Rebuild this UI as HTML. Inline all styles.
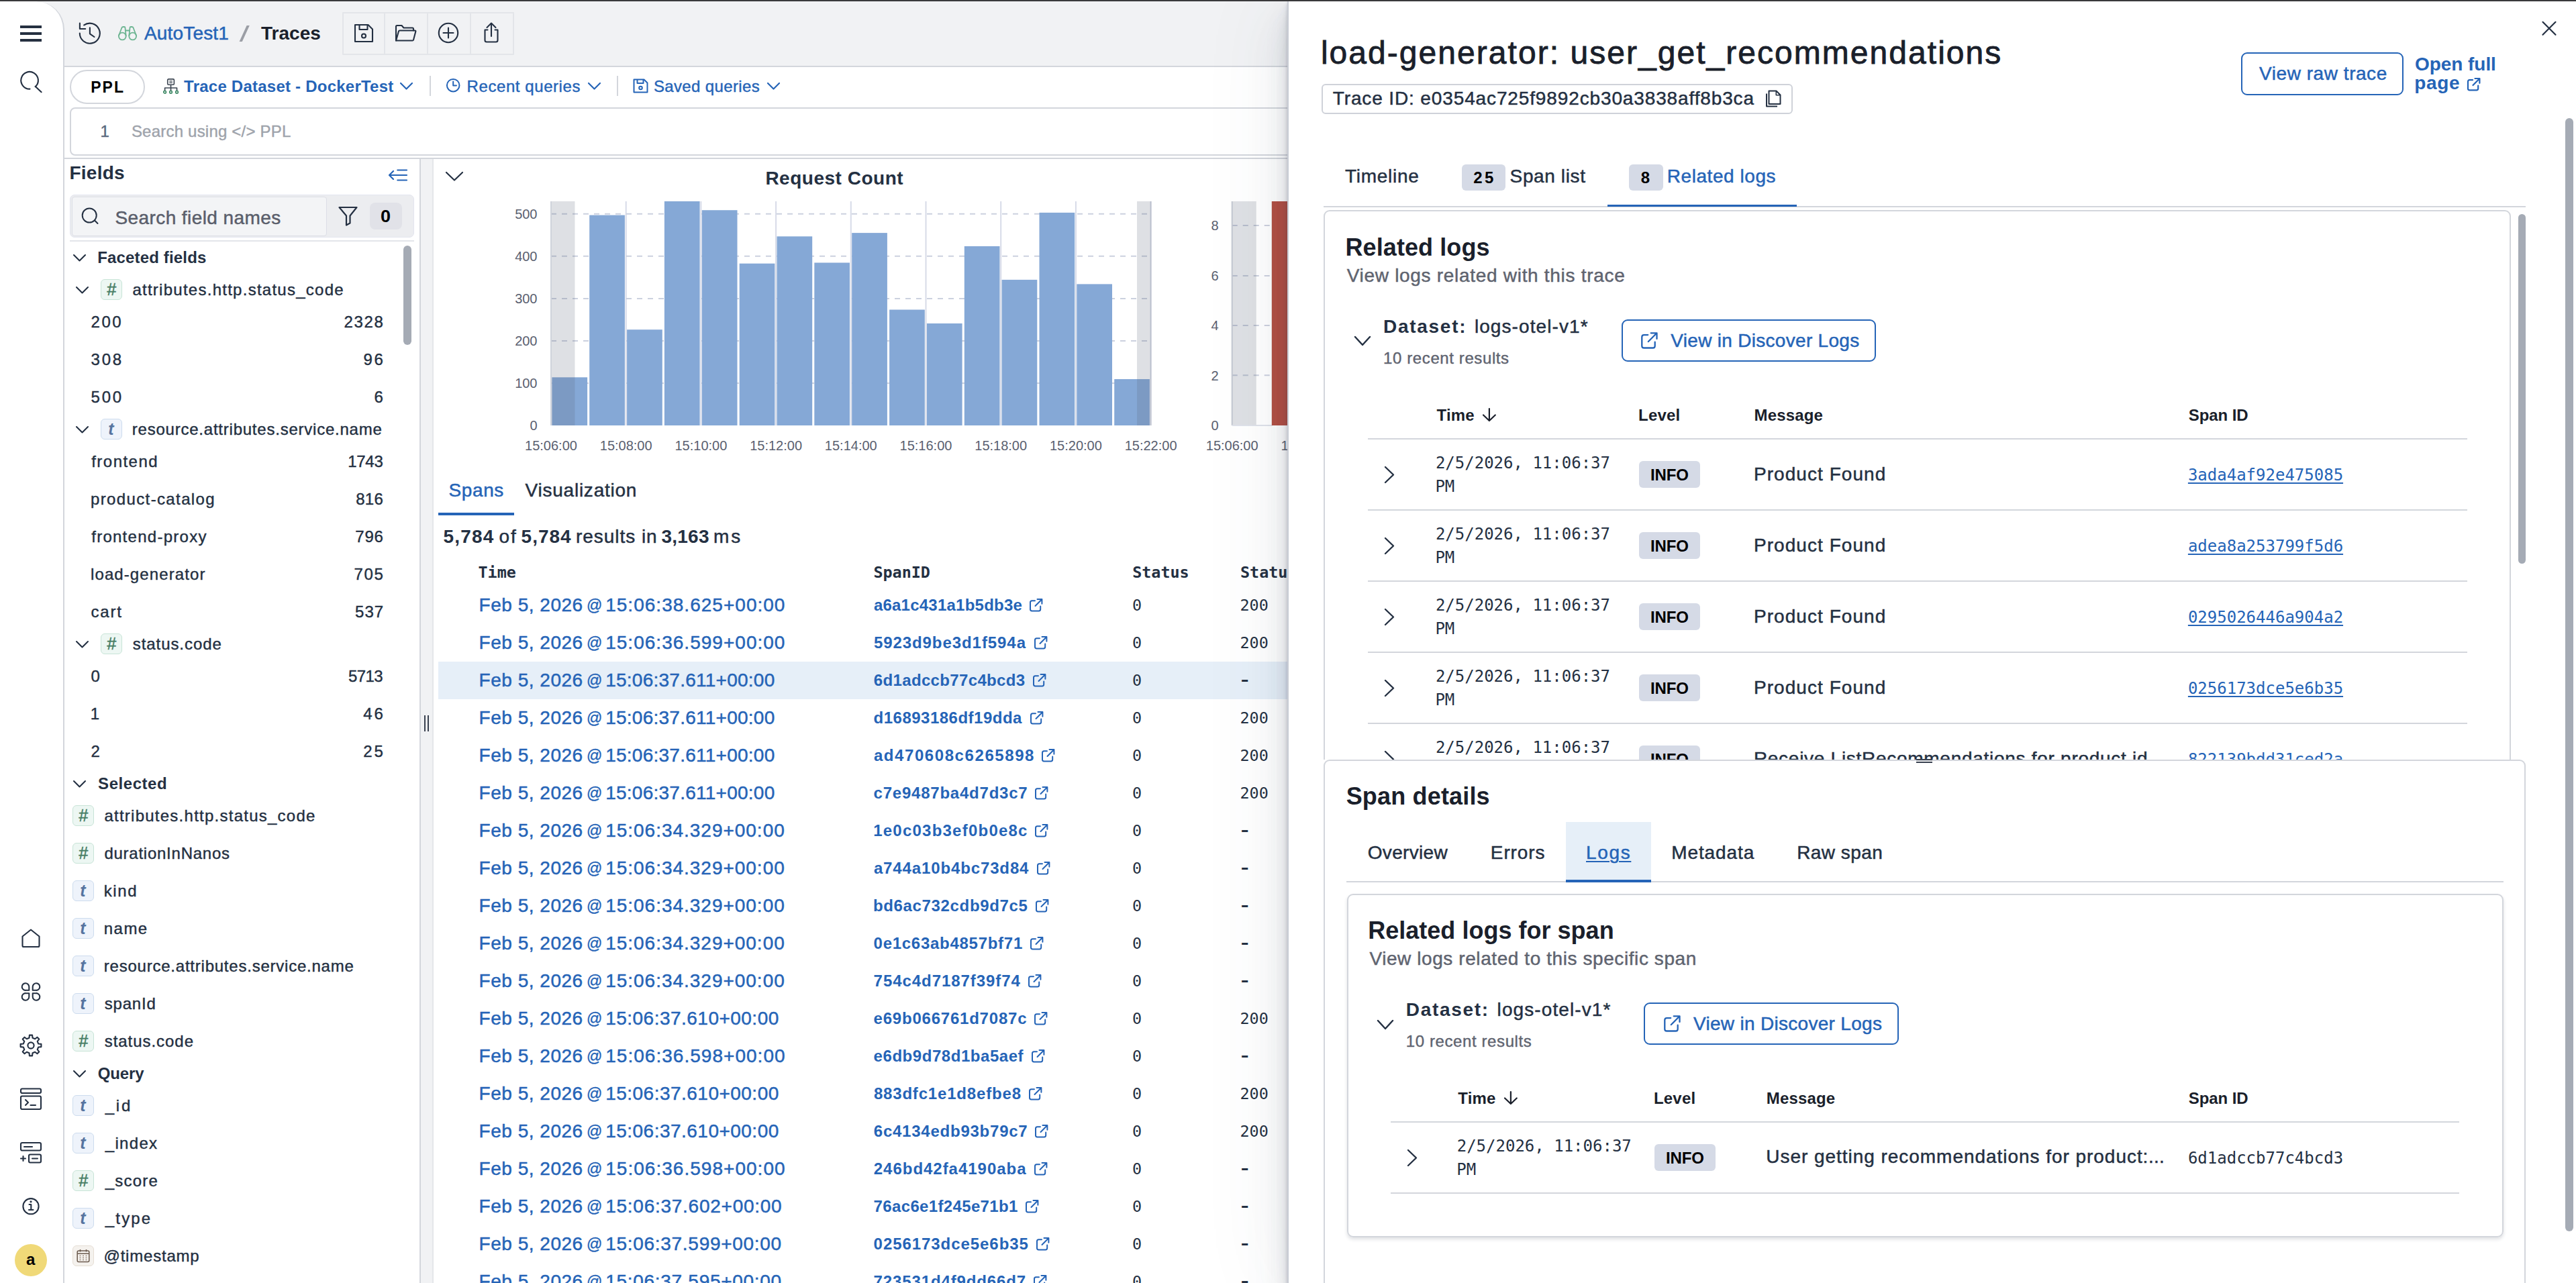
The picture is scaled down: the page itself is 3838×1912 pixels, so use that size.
<!DOCTYPE html>
<html lang="en"><head><meta charset="utf-8"><title>Traces - AutoTest1</title>
<style>
html,body{margin:0;padding:0;}
body{width:3838px;height:1912px;overflow:hidden;position:relative;background:#fff;font-family:"Liberation Sans",Arial,sans-serif;}
.t{position:absolute;white-space:pre;}
.m{font-family:"DejaVu Sans Mono","Liberation Mono",monospace;}
.b{position:absolute;box-sizing:border-box;}
svg{position:absolute;overflow:visible;}
.ic{fill:none;stroke:#243042;stroke-width:2.1;stroke-linecap:round;stroke-linejoin:round;}
.u{text-decoration:underline;text-decoration-thickness:2px;text-underline-offset:2.5px;}
</style></head><body>

<div class="b" style="left:0px;top:0px;width:3838px;height:100px;background:#f1f2f4;"></div>
<div class="b" style="left:0px;top:98px;width:3838px;height:2px;background:#d3d6dc;"></div>
<div class="b" style="left:0px;top:2px;width:96px;height:1910px;background:#fff;border-right:2px solid #d3d6dc;border-top-right-radius:42px;"></div>
<div class="b" style="left:0px;top:0px;width:3838px;height:2px;background:#3a3a3c;"></div>
<div class="b" style="left:30px;top:38.2px;width:32px;height:3.7px;background:#253040;"></div>
<div class="b" style="left:30px;top:48.2px;width:32px;height:3.7px;background:#253040;"></div>
<div class="b" style="left:30px;top:58.2px;width:32px;height:3.7px;background:#253040;"></div>
<svg style="left:26px;top:102px" width="40" height="40" viewBox="0 0 40 40"><path class="ic" d="M18.5 30.6 A12.8 12.8 0 1 1 26.8 27.2"/><path class="ic" d="M26.6 26.8 L35.6 35.2"/></svg>
<svg style="left:26px;top:1378px" width="40" height="40" viewBox="0 0 40 40"><path class="ic" d="M7.5 17.5 L20 7.5 L32.5 17.5 L32.5 31.2 Q32.5 33 30.7 33 L9.3 33 Q7.5 33 7.5 31.2 Z"/></svg>
<svg style="left:26px;top:1458px" width="40" height="40" viewBox="0 0 40 40"><path class="ic" d="M17.3 17.8 L12.5 17.8 A5.3 5.3 0 1 1 17.3 12.5 Z"/><path class="ic" d="M22.7 17.8 L27.5 17.8 A5.3 5.3 0 1 0 22.7 12.5 Z"/><path class="ic" d="M17.3 22.2 L12.5 22.2 A5.3 5.3 0 1 0 17.3 27.5 Z"/><path class="ic" d="M22.7 22.2 L27.5 22.2 A5.3 5.3 0 1 1 22.7 27.5 Z"/></svg>
<svg style="left:26px;top:1538px" width="40" height="40" viewBox="0 0 40 40"><path class="ic" d="M17.5 8.8 L17.9 4.6 L22.1 4.6 L22.5 8.8 L26.2 10.3 L29.4 7.7 L32.3 10.6 L29.7 13.8 L31.2 17.5 L35.4 17.9 L35.4 22.1 L31.2 22.5 L29.7 26.2 L32.3 29.4 L29.4 32.3 L26.2 29.7 L22.5 31.2 L22.1 35.4 L17.9 35.4 L17.5 31.2 L13.8 29.7 L10.6 32.3 L7.7 29.4 L10.3 26.2 L8.8 22.5 L4.6 22.1 L4.6 17.9 L8.8 17.5 L10.3 13.8 L7.7 10.6 L10.6 7.7 L13.8 10.3 Z"/><circle class="ic" cx="20" cy="20" r="4.6"/></svg>
<svg style="left:26px;top:1618px" width="40" height="40" viewBox="0 0 40 40"><rect class="ic" x="5" y="4.5" width="30" height="6.5" rx="2"/><rect class="ic" x="5" y="15.5" width="30" height="19.5" rx="2"/><path class="ic" d="M12 21 L16 25 L12 29 M19.5 29 L27 29"/></svg>
<svg style="left:26px;top:1698px" width="40" height="40" viewBox="0 0 40 40"><rect class="ic" x="5" y="5" width="30" height="11.5" rx="2"/><path class="ic" d="M10 11 L22 11"/><rect class="ic" x="17" y="22.5" width="18" height="12" rx="2"/><path class="ic" d="M22 28.5 L30 28.5 M5 28.5 L12 28.5 M8.5 25 L8.5 32"/></svg>
<svg style="left:26px;top:1778px" width="40" height="40" viewBox="0 0 40 40"><circle class="ic" cx="20" cy="19.7" r="11.6"/><path class="ic" d="M17.5 17 L20.3 17 L20.3 25 M17 25 L23.5 25"/><circle cx="20" cy="12.8" r="1.6" fill="#243042"/></svg>
<div class="b" style="left:21.7px;top:1854px;width:48.4px;height:48.4px;background:#f0d978;border-radius:50%;"></div>
<span class="t" style="top:1865.1px;font-size:24px;line-height:24px;left:38.9px;font-weight:700;color:#000;">a</span>
<svg style="left:114px;top:30px" width="40" height="40" viewBox="0 0 40 40"><path class="ic" d="M11.2 7.4 A15 15 0 1 1 4.8 19.6"/><path class="ic" d="M4.9 4.6 L4.9 13 L13.2 13"/><path class="ic" d="M19.9 11.3 L19.9 20.3 L26.5 25"/></svg>
<svg style="left:174px;top:36px" width="32" height="28" viewBox="0 0 32 28"><g fill="none" stroke="#6db592" stroke-width="1.8" stroke-linejoin="round" stroke-linecap="round"><circle cx="8.3" cy="18" r="5.4"/><circle cx="23.7" cy="18" r="5.4"/><path d="M3.2 16.5 L7.5 5.2 Q8 4 9.5 4 L11 4 Q12.5 4 12.5 5.5 L13.6 17"/><path d="M28.8 16.5 L24.5 5.2 Q24 4 22.5 4 L21 4 Q19.5 4 19.5 5.5 L18.4 17"/><path d="M12.8 9.5 L19.2 9.5"/></g></svg>
<span class="t" style="top:36.3px;font-size:28px;line-height:28px;left:215.0px;letter-spacing:0.16px;-webkit-text-stroke:0.49px;color:#2564b7;">AutoTest1</span>
<svg style="left:354px;top:36px" width="20" height="28" viewBox="0 0 20 28"><path d="M13.6 2 L17.8 2 L6.8 26 L2.6 26 Z" fill="#9b9ea5"/></svg>
<span class="t" style="top:36.3px;font-size:28px;line-height:28px;left:389.0px;letter-spacing:0.03px;font-weight:700;color:#1a1f2b;">Traces</span>
<div class="b" style="left:510px;top:17.6px;width:256px;height:64.2px;border:2px solid #e3e5e9;border-radius:1px;"></div>
<div class="b" style="left:571.6px;top:17.6px;width:2px;height:64.2px;background:#e3e5e9;"></div>
<div class="b" style="left:635.8px;top:17.6px;width:2px;height:64.2px;background:#e3e5e9;"></div>
<div class="b" style="left:700px;top:17.6px;width:2px;height:64.2px;background:#e3e5e9;"></div>
<svg style="left:522px;top:29px" width="40" height="40" viewBox="0 0 40 40"><path class="ic" d="M7 8 L26.5 8 L33 14.5 L33 33 L7 33 Z"/><path class="ic" d="M13.5 8.5 L13.5 15 L25.5 15 L25.5 8.5"/><circle class="ic" cx="20" cy="24.5" r="3"/></svg>
<svg style="left:584px;top:30px" width="40" height="40" viewBox="0 0 40 40"><path class="ic" d="M6 30.5 L6 9.5 Q6 8 7.5 8 L14.5 8 L17.5 11.5 L30.5 11.5 Q32 11.5 32 13 L32 15.5"/><path class="ic" d="M6 30.5 L10 16.5 Q10.3 15.5 11.5 15.5 L34 15.5 Q35.8 15.5 35.3 17 L32 29.5 Q31.7 30.5 30.5 30.5 Z"/></svg>
<svg style="left:648px;top:29px" width="40" height="40" viewBox="0 0 40 40"><circle class="ic" cx="20" cy="20" r="14.2"/><path class="ic" d="M20 12.5 L20 27.5 M12.5 20 L27.5 20"/></svg>
<svg style="left:712px;top:29px" width="40" height="40" viewBox="0 0 40 40"><path class="ic" d="M14.5 15.5 L10.5 15.5 L10.5 31 Q10.5 33.5 13 33.5 L27 33.5 Q29.5 33.5 29.5 31 L29.5 15.5 L25.5 15.5"/><path class="ic" d="M20 25 L20 6 M13.5 12 L20 5.5 L26.5 12"/></svg>
<div class="b" style="left:96px;top:100px;width:3742px;height:136px;background:#fff;"></div>
<div class="b" style="left:104.2px;top:104.4px;width:111.4px;height:51px;border:2px solid #d3d6dc;border-radius:26px;"></div>
<span class="t" style="top:118.5px;font-size:23px;line-height:23px;left:135.2px;letter-spacing:2.02px;font-weight:700;color:#000;">PPL</span>
<svg style="left:241.3px;top:113.8px" width="27.6" height="29.4" viewBox="0 0 30 32"><g fill="none" stroke="#3d4652" stroke-width="1.8" stroke-linejoin="round"><rect x="9.5" y="4.3" width="10.5" height="9" rx="1.5"/><path d="M12.3 7.5 L17.2 7.5 M12.3 10.2 L17.2 10.2" stroke-width="1.3"/><path d="M14.7 13.5 L14.7 23 M5 23 L5 18.5 L24.5 18.5 L24.5 23"/></g><g fill="none" stroke="#3f8a66" stroke-width="1.8"><circle cx="5" cy="25.3" r="2"/><circle cx="14.7" cy="25.3" r="2"/><circle cx="24.5" cy="25.3" r="2"/></g></svg>
<span class="t" style="top:116.5px;font-size:24px;line-height:24px;left:274.1px;letter-spacing:0.23px;font-weight:700;color:#2564b7;">Trace Dataset - DockerTest</span>
<svg style="left:594.3px;top:121.25px" width="23" height="14.5" viewBox="0 0 23 14.5"><path d="M3 3 L11.5 11.5 L20 3" fill="none" stroke="#2564b7" stroke-width="2.2" stroke-linecap="round" stroke-linejoin="round"/></svg>
<div class="b" style="left:640px;top:112.7px;width:2px;height:30.7px;background:#d3d6dc;"></div>
<svg style="left:663px;top:115px" width="24" height="24" viewBox="0 0 24 24"><g fill="none" stroke="#2564b7" stroke-width="2" stroke-linecap="round" stroke-linejoin="round"><circle cx="12.2" cy="12.2" r="9.3"/><path d="M12.2 6.5 L12.2 12.5 L17 12.5"/></g></svg>
<span class="t" style="top:116.5px;font-size:24px;line-height:24px;left:695.6px;letter-spacing:0.57px;-webkit-text-stroke:0.42px;color:#2564b7;">Recent queries</span>
<svg style="left:873.7px;top:121.25px" width="23" height="14.5" viewBox="0 0 23 14.5"><path d="M3 3 L11.5 11.5 L20 3" fill="none" stroke="#2564b7" stroke-width="2.2" stroke-linecap="round" stroke-linejoin="round"/></svg>
<div class="b" style="left:918.7px;top:112.7px;width:2px;height:30.7px;background:#d3d6dc;"></div>
<svg style="left:942px;top:116px" width="24" height="24" viewBox="0 0 24 24"><g fill="none" stroke="#2564b7" stroke-width="2" stroke-linejoin="round"><path d="M2.5 2.5 L17.5 2.5 L22.5 7.5 L22.5 21.5 L2.5 21.5 Z"/><path d="M7.5 2.8 L7.5 8 L16.5 8 L16.5 2.8"/><circle cx="12.5" cy="15" r="2.3"/></g></svg>
<span class="t" style="top:116.5px;font-size:24px;line-height:24px;left:973.9px;letter-spacing:0.37px;-webkit-text-stroke:0.42px;color:#2564b7;">Saved queries</span>
<svg style="left:1141.0px;top:121.25px" width="23" height="14.5" viewBox="0 0 23 14.5"><path d="M3 3 L11.5 11.5 L20 3" fill="none" stroke="#2564b7" stroke-width="2.2" stroke-linecap="round" stroke-linejoin="round"/></svg>
<div class="b" style="left:104px;top:160px;width:3722.7px;height:71.8px;border:2px solid #d3d6dc;border-radius:8px;background:#fff;"></div>
<span class="t" style="top:183.7px;font-size:24px;line-height:24px;left:149.6px;-webkit-text-stroke:0.42px;color:#5a6a7e;">1</span>
<span class="t" style="top:183.7px;font-size:24px;line-height:24px;left:195.9px;letter-spacing:0.21px;-webkit-text-stroke:0.42px;color:#9ea3ab;">Search using &lt;/&gt; PPL</span>
<div class="b" style="left:96px;top:235.4px;width:3742px;height:2px;background:#d3d6dc;"></div>
<div class="b" style="left:624.6px;top:237px;width:2px;height:1675px;background:#d3d6dc;"></div>
<div class="b" style="left:626.6px;top:237px;width:17.4px;height:1675px;background:#f1f2f4;"></div>
<div class="b" style="left:644px;top:237px;width:2px;height:1675px;background:#e4e6ea;"></div>
<div class="b" style="left:632px;top:1066px;width:2px;height:24px;background:#3a4250;"></div>
<div class="b" style="left:637px;top:1066px;width:2px;height:24px;background:#3a4250;"></div>
<span class="t" style="top:244.4px;font-size:28px;line-height:28px;left:103.4px;letter-spacing:0.26px;font-weight:700;color:#243042;">Fields</span>
<svg style="left:574px;top:246px" width="40" height="30" viewBox="0 0 40 30"><g fill="none" stroke="#2564b7" stroke-width="2.2" stroke-linecap="round" stroke-linejoin="round"><path d="M18.3 7.5 L32 7.5 M6 15 L32 15 M18.3 22.5 L32 22.5 M12 9 L6 15 L12 21"/></g></svg>
<div class="b" style="left:104.2px;top:289.8px;width:512.5px;height:63.8px;background:#ecedf0;border:1px solid #e3e5ef;border-radius:7px;"></div>
<div class="b" style="left:106.5px;top:292.5px;width:380px;height:59.5px;background:#f3f4f6;border:1.5px solid #dcdee6;border-radius:4px;"></div>
<svg style="left:118px;top:306px" width="32" height="32" viewBox="0 0 32 32"><circle class="ic" cx="15.2" cy="15" r="10.5" style="stroke-width:2"/><path class="ic" d="M22.8 22.3 L27.5 27" style="stroke-width:2"/></svg>
<span class="t" style="top:310.7px;font-size:28px;line-height:28px;left:171.5px;letter-spacing:0.41px;-webkit-text-stroke:0.49px;color:#5a5e6b;">Search field names</span>
<svg style="left:500px;top:304px" width="36" height="36" viewBox="0 0 36 36"><path class="ic" d="M5.5 5 L31.5 5 L21.5 17.5 L21.5 28.5 L16 31.5 L16 17.5 Z" style="stroke-width:2.2"/></svg>
<div class="b" style="left:550.8px;top:302px;width:48px;height:39.6px;background:#e1e2e8;border-radius:8px;"></div>
<span class="t" style="top:309.8px;font-size:25px;line-height:25px;left:566.5px;font-weight:700;color:#000;transform:scaleX(1.08);transform-origin:left;">0</span>
<div class="b" style="left:104.2px;top:358.3px;width:512.5px;height:2px;background:#e3e5ea;"></div>
<div class="b" style="left:601.2px;top:366px;width:11.8px;height:148.4px;background:#a5abb5;border-radius:6px;"></div>
<svg style="left:106.9px;top:377.15px" width="23" height="14.5" viewBox="0 0 23 14.5"><path d="M3 3 L11.5 11.5 L20 3" fill="none" stroke="#243042" stroke-width="2.1" stroke-linecap="round" stroke-linejoin="round"/></svg><span class="t" style="top:372.0px;font-size:24px;line-height:24px;left:145.2px;letter-spacing:0.16px;font-weight:700;color:#243042;">Faceted fields</span>
<svg style="left:110.7px;top:424.65000000000003px" width="23" height="14.5" viewBox="0 0 23 14.5"><path d="M3 3 L11.5 11.5 L20 3" fill="none" stroke="#243042" stroke-width="2.1" stroke-linecap="round" stroke-linejoin="round"/></svg><div class="b" style="left:150.2px;top:416.0px;width:31.6px;height:31.2px;background:#edf7f3;border:1.5px solid #c8e4d7;border-radius:6px;"></div><span class="t" style="left:150.2px;top:419.1px;width:31.6px;text-align:center;font:italic 400 25px/25px 'Liberation Sans',sans-serif;color:#467d64;-webkit-text-stroke:0.5px;">#</span><span class="t" style="top:420.1px;font-size:24px;line-height:24px;left:197.4px;letter-spacing:1.26px;-webkit-text-stroke:0.42px;color:#243042;">attributes.http.status_code</span>
<span class="t" style="top:468.0px;font-size:24px;line-height:24px;left:135.4px;letter-spacing:2.64px;-webkit-text-stroke:0.42px;color:#243042;">200</span><span class="t" style="top:468.0px;font-size:24px;line-height:24px;left:512.5px;letter-spacing:1.62px;-webkit-text-stroke:0.42px;color:#243042;">2328</span>
<span class="t" style="top:524.0px;font-size:24px;line-height:24px;left:135.6px;letter-spacing:2.78px;-webkit-text-stroke:0.42px;color:#243042;">308</span><span class="t" style="top:524.0px;font-size:24px;line-height:24px;left:541.4px;letter-spacing:2.70px;-webkit-text-stroke:0.42px;color:#243042;">96</span>
<span class="t" style="top:580.0px;font-size:24px;line-height:24px;left:135.6px;letter-spacing:2.72px;-webkit-text-stroke:0.42px;color:#243042;">500</span><span class="t" style="top:580.0px;font-size:24px;line-height:24px;left:557.4px;-webkit-text-stroke:0.42px;color:#243042;">6</span>
<svg style="left:110.7px;top:632.65px" width="23" height="14.5" viewBox="0 0 23 14.5"><path d="M3 3 L11.5 11.5 L20 3" fill="none" stroke="#243042" stroke-width="2.1" stroke-linecap="round" stroke-linejoin="round"/></svg><div class="b" style="left:150.2px;top:624.0px;width:31.6px;height:31.2px;background:#eef3fb;border:1.5px solid #cddcee;border-radius:6px;"></div><span class="t" style="left:150.2px;top:627.2px;width:30.6px;text-align:center;font:italic bold 25px/25px 'Liberation Sans',sans-serif;color:#5674a0;">t</span><span class="t" style="top:628.1px;font-size:24px;line-height:24px;left:196.8px;letter-spacing:0.77px;-webkit-text-stroke:0.42px;color:#243042;">resource.attributes.service.name</span>
<span class="t" style="top:676.0px;font-size:24px;line-height:24px;left:136.2px;letter-spacing:1.48px;-webkit-text-stroke:0.42px;color:#243042;">frontend</span><span class="t" style="top:676.0px;font-size:24px;line-height:24px;left:518.2px;letter-spacing:-0.28px;-webkit-text-stroke:0.42px;color:#243042;">1743</span>
<span class="t" style="top:732.0px;font-size:24px;line-height:24px;left:135.0px;letter-spacing:1.37px;-webkit-text-stroke:0.42px;color:#243042;">product-catalog</span><span class="t" style="top:732.0px;font-size:24px;line-height:24px;left:530.2px;letter-spacing:0.29px;-webkit-text-stroke:0.42px;color:#243042;">816</span>
<span class="t" style="top:788.0px;font-size:24px;line-height:24px;left:136.2px;letter-spacing:1.27px;-webkit-text-stroke:0.42px;color:#243042;">frontend-proxy</span><span class="t" style="top:788.0px;font-size:24px;line-height:24px;left:529.3px;letter-spacing:0.75px;-webkit-text-stroke:0.42px;color:#243042;">796</span>
<span class="t" style="top:844.0px;font-size:24px;line-height:24px;left:135.0px;letter-spacing:1.10px;-webkit-text-stroke:0.42px;color:#243042;">load-generator</span><span class="t" style="top:844.0px;font-size:24px;line-height:24px;left:527.4px;letter-spacing:1.70px;-webkit-text-stroke:0.42px;color:#243042;">705</span>
<span class="t" style="top:900.0px;font-size:24px;line-height:24px;left:135.6px;letter-spacing:1.74px;-webkit-text-stroke:0.42px;color:#243042;">cart</span><span class="t" style="top:900.0px;font-size:24px;line-height:24px;left:529.1px;letter-spacing:0.95px;-webkit-text-stroke:0.42px;color:#243042;">537</span>
<svg style="left:110.7px;top:952.65px" width="23" height="14.5" viewBox="0 0 23 14.5"><path d="M3 3 L11.5 11.5 L20 3" fill="none" stroke="#243042" stroke-width="2.1" stroke-linecap="round" stroke-linejoin="round"/></svg><div class="b" style="left:150.2px;top:944.0px;width:31.6px;height:31.2px;background:#edf7f3;border:1.5px solid #c8e4d7;border-radius:6px;"></div><span class="t" style="left:150.2px;top:947.1px;width:31.6px;text-align:center;font:italic 400 25px/25px 'Liberation Sans',sans-serif;color:#467d64;-webkit-text-stroke:0.5px;">#</span><span class="t" style="top:948.1px;font-size:24px;line-height:24px;left:197.7px;letter-spacing:0.94px;-webkit-text-stroke:0.42px;color:#243042;">status.code</span>
<span class="t" style="top:996.0px;font-size:24px;line-height:24px;left:135.6px;-webkit-text-stroke:0.42px;color:#243042;">0</span><span class="t" style="top:996.0px;font-size:24px;line-height:24px;left:519.0px;letter-spacing:-0.56px;-webkit-text-stroke:0.42px;color:#243042;">5713</span>
<span class="t" style="top:1052.0px;font-size:24px;line-height:24px;left:134.8px;-webkit-text-stroke:0.42px;color:#243042;">1</span><span class="t" style="top:1052.0px;font-size:24px;line-height:24px;left:541.3px;letter-spacing:2.80px;-webkit-text-stroke:0.42px;color:#243042;">46</span>
<span class="t" style="top:1108.0px;font-size:24px;line-height:24px;left:135.4px;-webkit-text-stroke:0.42px;color:#243042;">2</span><span class="t" style="top:1108.0px;font-size:24px;line-height:24px;left:541.3px;letter-spacing:2.82px;-webkit-text-stroke:0.42px;color:#243042;">25</span>
<svg style="left:106.9px;top:1161.15px" width="23" height="14.5" viewBox="0 0 23 14.5"><path d="M3 3 L11.5 11.5 L20 3" fill="none" stroke="#243042" stroke-width="2.1" stroke-linecap="round" stroke-linejoin="round"/></svg><span class="t" style="top:1156.0px;font-size:24px;line-height:24px;left:146.1px;letter-spacing:0.55px;font-weight:700;color:#243042;">Selected</span>
<div class="b" style="left:108.1px;top:1200.1000000000001px;width:31.6px;height:31.2px;background:#edf7f3;border:1.5px solid #c8e4d7;border-radius:6px;"></div><span class="t" style="left:108.1px;top:1203.2px;width:31.6px;text-align:center;font:italic 400 25px/25px 'Liberation Sans',sans-serif;color:#467d64;-webkit-text-stroke:0.5px;">#</span><span class="t" style="top:1204.2px;font-size:24px;line-height:24px;left:155.4px;letter-spacing:1.25px;-webkit-text-stroke:0.42px;color:#243042;">attributes.http.status_code</span>
<div class="b" style="left:108.1px;top:1256.1000000000001px;width:31.6px;height:31.2px;background:#edf7f3;border:1.5px solid #c8e4d7;border-radius:6px;"></div><span class="t" style="left:108.1px;top:1259.2px;width:31.6px;text-align:center;font:italic 400 25px/25px 'Liberation Sans',sans-serif;color:#467d64;-webkit-text-stroke:0.5px;">#</span><span class="t" style="top:1260.2px;font-size:24px;line-height:24px;left:155.4px;letter-spacing:0.75px;-webkit-text-stroke:0.42px;color:#243042;">durationInNanos</span>
<div class="b" style="left:108.1px;top:1312.1000000000001px;width:31.6px;height:31.2px;background:#eef3fb;border:1.5px solid #cddcee;border-radius:6px;"></div><span class="t" style="left:108.1px;top:1315.3px;width:30.6px;text-align:center;font:italic bold 25px/25px 'Liberation Sans',sans-serif;color:#5674a0;">t</span><span class="t" style="top:1316.2px;font-size:24px;line-height:24px;left:154.8px;letter-spacing:1.56px;-webkit-text-stroke:0.42px;color:#243042;">kind</span>
<div class="b" style="left:108.1px;top:1368.1000000000001px;width:31.6px;height:31.2px;background:#eef3fb;border:1.5px solid #cddcee;border-radius:6px;"></div><span class="t" style="left:108.1px;top:1371.3px;width:30.6px;text-align:center;font:italic bold 25px/25px 'Liberation Sans',sans-serif;color:#5674a0;">t</span><span class="t" style="top:1372.2px;font-size:24px;line-height:24px;left:154.8px;letter-spacing:1.45px;-webkit-text-stroke:0.42px;color:#243042;">name</span>
<div class="b" style="left:108.1px;top:1424.1000000000001px;width:31.6px;height:31.2px;background:#eef3fb;border:1.5px solid #cddcee;border-radius:6px;"></div><span class="t" style="left:108.1px;top:1427.3px;width:30.6px;text-align:center;font:italic bold 25px/25px 'Liberation Sans',sans-serif;color:#5674a0;">t</span><span class="t" style="top:1428.2px;font-size:24px;line-height:24px;left:154.8px;letter-spacing:0.77px;-webkit-text-stroke:0.42px;color:#243042;">resource.attributes.service.name</span>
<div class="b" style="left:108.1px;top:1480.1000000000001px;width:31.6px;height:31.2px;background:#eef3fb;border:1.5px solid #cddcee;border-radius:6px;"></div><span class="t" style="left:108.1px;top:1483.3px;width:30.6px;text-align:center;font:italic bold 25px/25px 'Liberation Sans',sans-serif;color:#5674a0;">t</span><span class="t" style="top:1484.2px;font-size:24px;line-height:24px;left:155.7px;letter-spacing:0.80px;-webkit-text-stroke:0.42px;color:#243042;">spanId</span>
<div class="b" style="left:108.1px;top:1536.1000000000001px;width:31.6px;height:31.2px;background:#edf7f3;border:1.5px solid #c8e4d7;border-radius:6px;"></div><span class="t" style="left:108.1px;top:1539.2px;width:31.6px;text-align:center;font:italic 400 25px/25px 'Liberation Sans',sans-serif;color:#467d64;-webkit-text-stroke:0.5px;">#</span><span class="t" style="top:1540.2px;font-size:24px;line-height:24px;left:155.7px;letter-spacing:0.96px;-webkit-text-stroke:0.42px;color:#243042;">status.code</span>
<svg style="left:106.9px;top:1593.3500000000001px" width="23" height="14.5" viewBox="0 0 23 14.5"><path d="M3 3 L11.5 11.5 L20 3" fill="none" stroke="#243042" stroke-width="2.1" stroke-linecap="round" stroke-linejoin="round"/></svg><span class="t" style="top:1588.2px;font-size:24px;line-height:24px;left:145.8px;letter-spacing:-0.14px;font-weight:700;color:#243042;">Query</span>
<div class="b" style="left:108.1px;top:1632.2px;width:31.6px;height:31.2px;background:#eef3fb;border:1.5px solid #cddcee;border-radius:6px;"></div><span class="t" style="left:108.1px;top:1635.3999999999999px;width:30.6px;text-align:center;font:italic bold 25px/25px 'Liberation Sans',sans-serif;color:#5674a0;">t</span><span class="t" style="top:1636.3px;font-size:24px;line-height:24px;left:156.8px;letter-spacing:2.73px;-webkit-text-stroke:0.42px;color:#243042;">_id</span>
<div class="b" style="left:108.1px;top:1688.2px;width:31.6px;height:31.2px;background:#eef3fb;border:1.5px solid #cddcee;border-radius:6px;"></div><span class="t" style="left:108.1px;top:1691.3999999999999px;width:30.6px;text-align:center;font:italic bold 25px/25px 'Liberation Sans',sans-serif;color:#5674a0;">t</span><span class="t" style="top:1692.3px;font-size:24px;line-height:24px;left:156.8px;letter-spacing:1.32px;-webkit-text-stroke:0.42px;color:#243042;">_index</span>
<div class="b" style="left:108.1px;top:1744.2px;width:31.6px;height:31.2px;background:#edf7f3;border:1.5px solid #c8e4d7;border-radius:6px;"></div><span class="t" style="left:108.1px;top:1747.3px;width:31.6px;text-align:center;font:italic 400 25px/25px 'Liberation Sans',sans-serif;color:#467d64;-webkit-text-stroke:0.5px;">#</span><span class="t" style="top:1748.3px;font-size:24px;line-height:24px;left:156.8px;letter-spacing:1.22px;-webkit-text-stroke:0.42px;color:#243042;">_score</span>
<div class="b" style="left:108.1px;top:1800.2px;width:31.6px;height:31.2px;background:#eef3fb;border:1.5px solid #cddcee;border-radius:6px;"></div><span class="t" style="left:108.1px;top:1803.3999999999999px;width:30.6px;text-align:center;font:italic bold 25px/25px 'Liberation Sans',sans-serif;color:#5674a0;">t</span><span class="t" style="top:1804.3px;font-size:24px;line-height:24px;left:156.8px;letter-spacing:2.16px;-webkit-text-stroke:0.42px;color:#243042;">_type</span>
<div class="b" style="left:108.1px;top:1856.2px;width:31.6px;height:31.2px;background:#f5f2ee;border:1.5px solid #e6ded5;border-radius:6px;"></div><svg style="left:113.89999999999999px;top:1861.3px" width="20" height="21" viewBox="0 0 20 21"><g fill="none" stroke="#6b5a4d" stroke-width="1.5"><rect x="1.2" y="3" width="17.6" height="16.5" rx="2"/><path d="M1.2 7.2 L18.8 7.2 M5.5 1 L5.5 4.5 M14.5 1 L14.5 4.5"/><path d="M4.5 10.5 h2 M9 10.5 h2 M13.5 10.5 h2 M4.5 13.5 h2 M9 13.5 h2 M13.5 13.5 h2 M4.5 16.5 h2 M9 16.5 h2 M13.5 16.5 h2" stroke-width="1.6" stroke="#9a8b7e"/></g></svg><span class="t" style="top:1860.3px;font-size:24px;line-height:24px;left:154.5px;letter-spacing:0.79px;-webkit-text-stroke:0.42px;color:#243042;">@timestamp</span>
<svg style="left:662.0px;top:253.75px" width="30" height="17.5" viewBox="0 0 30 17.5"><path d="M3 3 L15.0 14.5 L27 3" fill="none" stroke="#243042" stroke-width="2.2" stroke-linecap="round" stroke-linejoin="round"/></svg>
<span class="t" style="top:252.1px;font-size:28px;line-height:28px;left:1140.4px;letter-spacing:0.51px;font-weight:700;color:#243042;">Request Count</span>
<svg style="left:0;top:0" width="1960" height="700" viewBox="0 0 1960 700"><rect x="931.7" y="300.0" width="2" height="334.0" fill="#d7dbe8"/><rect x="1043.4" y="300.0" width="2" height="334.0" fill="#d7dbe8"/><rect x="1155.1" y="300.0" width="2" height="334.0" fill="#d7dbe8"/><rect x="1266.8" y="300.0" width="2" height="334.0" fill="#d7dbe8"/><rect x="1378.5" y="300.0" width="2" height="334.0" fill="#d7dbe8"/><rect x="1490.2" y="300.0" width="2" height="334.0" fill="#d7dbe8"/><rect x="1601.9" y="300.0" width="2" height="334.0" fill="#d7dbe8"/><line x1="821.0" y1="571.0" x2="1710.6" y2="571.0" stroke="#ccd1df" stroke-width="2" stroke-dasharray="8 8"/><line x1="821.0" y1="507.9" x2="1710.6" y2="507.9" stroke="#ccd1df" stroke-width="2" stroke-dasharray="8 8"/><line x1="821.0" y1="444.9" x2="1710.6" y2="444.9" stroke="#ccd1df" stroke-width="2" stroke-dasharray="8 8"/><line x1="821.0" y1="381.8" x2="1710.6" y2="381.8" stroke="#ccd1df" stroke-width="2" stroke-dasharray="8 8"/><line x1="821.0" y1="318.8" x2="1710.6" y2="318.8" stroke="#ccd1df" stroke-width="2" stroke-dasharray="8 8"/><rect x="822.4" y="562.3" width="52.7" height="71.7" fill="#85a8d6"/><rect x="878.2" y="320.6" width="52.7" height="313.4" fill="#85a8d6"/><rect x="934.1" y="491.2" width="52.7" height="142.8" fill="#85a8d6"/><rect x="989.9" y="300.0" width="52.7" height="334.0" fill="#85a8d6"/><rect x="1045.8" y="313.2" width="52.7" height="320.8" fill="#85a8d6"/><rect x="1101.7" y="392.7" width="52.7" height="241.3" fill="#85a8d6"/><rect x="1157.5" y="352.3" width="52.7" height="281.7" fill="#85a8d6"/><rect x="1213.3" y="391.5" width="52.7" height="242.5" fill="#85a8d6"/><rect x="1269.2" y="347.1" width="52.7" height="286.9" fill="#85a8d6"/><rect x="1325.1" y="461.5" width="52.7" height="172.5" fill="#85a8d6"/><rect x="1380.9" y="482.0" width="52.7" height="152.0" fill="#85a8d6"/><rect x="1436.8" y="366.9" width="52.7" height="267.1" fill="#85a8d6"/><rect x="1492.6" y="416.9" width="52.7" height="217.1" fill="#85a8d6"/><rect x="1548.5" y="316.9" width="52.7" height="317.1" fill="#85a8d6"/><rect x="1604.3" y="423.4" width="52.7" height="210.6" fill="#85a8d6"/><rect x="1660.2" y="565.0" width="52.7" height="69.0" fill="#85a8d6"/><rect x="821.0" y="300.0" width="35.5" height="334.0" fill="rgba(90,100,118,0.2)"/><rect x="1694.0" y="300.0" width="20.6" height="334.0" fill="rgba(90,100,118,0.2)"/><rect x="820.0" y="300.0" width="2" height="334.0" fill="#cfd3db"/><rect x="1713.6" y="300.0" width="2" height="334.0" fill="#b9bfcd"/><line x1="1835.7" y1="559.3" x2="1894" y2="559.3" stroke="#ccd1df" stroke-width="2" stroke-dasharray="8 8"/><line x1="1835.7" y1="485" x2="1894" y2="485" stroke="#ccd1df" stroke-width="2" stroke-dasharray="8 8"/><line x1="1835.7" y1="411" x2="1894" y2="411" stroke="#ccd1df" stroke-width="2" stroke-dasharray="8 8"/><line x1="1835.7" y1="336" x2="1894" y2="336" stroke="#ccd1df" stroke-width="2" stroke-dasharray="8 8"/><rect x="1835.7" y="300.0" width="36" height="334.0" fill="rgba(90,100,118,0.2)"/><rect x="1834.7" y="300.0" width="2" height="334.0" fill="#c4c8d2"/><rect x="1835.7" y="633.0" width="60" height="2" fill="#dfe2ea"/><rect x="1894.8" y="300.0" width="52" height="334.0" fill="#b44e42"/><g font-family="Liberation Sans, Arial, sans-serif" font-size="20" fill="#5a6070"><text x="800.5" y="641.2" text-anchor="end">0</text><text x="800.5" y="578.2" text-anchor="end">100</text><text x="800.5" y="515.1" text-anchor="end">200</text><text x="800.5" y="452.1" text-anchor="end">300</text><text x="800.5" y="389.0" text-anchor="end">400</text><text x="800.5" y="325.9" text-anchor="end">500</text><text x="1815.5" y="641.2" text-anchor="end">0</text><text x="1815.5" y="566.5" text-anchor="end">2</text><text x="1815.5" y="492.2" text-anchor="end">4</text><text x="1815.5" y="418.2" text-anchor="end">6</text><text x="1815.5" y="343.2" text-anchor="end">8</text><text x="821.0" y="670.5" text-anchor="middle">15:06:00</text><text x="932.7" y="670.5" text-anchor="middle">15:08:00</text><text x="1044.4" y="670.5" text-anchor="middle">15:10:00</text><text x="1156.1" y="670.5" text-anchor="middle">15:12:00</text><text x="1267.8" y="670.5" text-anchor="middle">15:14:00</text><text x="1379.5" y="670.5" text-anchor="middle">15:16:00</text><text x="1491.2" y="670.5" text-anchor="middle">15:18:00</text><text x="1602.9" y="670.5" text-anchor="middle">15:20:00</text><text x="1714.6" y="670.5" text-anchor="middle">15:22:00</text><text x="1835.7" y="670.5" text-anchor="middle">15:06:00</text><text x="1947.4" y="670.5" text-anchor="middle">15:08:00</text></g></svg>
<span class="t" style="top:717.1px;font-size:28px;line-height:28px;left:668.4px;letter-spacing:0.64px;-webkit-text-stroke:0.49px;color:#2564b7;">Spans</span>
<span class="t" style="top:717.1px;font-size:28px;line-height:28px;left:782.5px;letter-spacing:0.77px;-webkit-text-stroke:0.49px;color:#243042;">Visualization</span>
<div class="b" style="left:653px;top:764.3px;width:113px;height:3.8px;background:#2564b7;"></div>
<span class="t" style="top:786.3px;font-size:28px;line-height:28px;left:660.6px;letter-spacing:1.17px;font-weight:700;color:#243042;">5,784</span>
<span class="t" style="top:786.3px;font-size:28px;line-height:28px;left:743.4px;letter-spacing:2.04px;-webkit-text-stroke:0.49px;color:#243042;">of</span>
<span class="t" style="top:786.3px;font-size:28px;line-height:28px;left:776.6px;letter-spacing:1.00px;font-weight:700;color:#243042;">5,784</span>
<span class="t" style="top:786.3px;font-size:28px;line-height:28px;left:857.9px;letter-spacing:0.97px;-webkit-text-stroke:0.49px;color:#243042;">results in</span>
<span class="t" style="top:786.3px;font-size:28px;line-height:28px;left:985.5px;letter-spacing:0.22px;font-weight:700;color:#243042;">3,163</span>
<span class="t" style="top:786.3px;font-size:28px;line-height:28px;left:1062.9px;letter-spacing:2.92px;-webkit-text-stroke:0.49px;color:#243042;">ms</span>
<span class="t m" style="top:842.3px;font-size:23.4px;line-height:23.4px;left:712.5px;font-weight:700;color:#243042;">Time</span>
<span class="t m" style="top:842.3px;font-size:23.4px;line-height:23.4px;left:1301.4px;font-weight:700;color:#243042;">SpanID</span>
<span class="t m" style="top:842.3px;font-size:23.4px;line-height:23.4px;left:1687.2px;font-weight:700;color:#243042;">Status</span>
<span class="t m" style="top:842.3px;font-size:23.4px;line-height:23.4px;left:1848.0px;font-weight:700;color:#243042;">Status</span>
<span class="t" style="top:887.9px;font-size:28px;line-height:28px;left:713.6px;letter-spacing:0.51px;-webkit-text-stroke:0.49px;color:#2564b7;">Feb 5, 2026</span>
<span class="t" style="top:891.1px;font-size:23px;line-height:23px;left:873.9px;-webkit-text-stroke:0.40px;color:#2564b7;">@</span>
<span class="t" style="top:887.9px;font-size:28px;line-height:28px;left:902.2px;letter-spacing:1.02px;-webkit-text-stroke:0.49px;color:#2564b7;">15:06:38.625+00:00</span>
<span class="t" style="top:890.4px;font-size:24px;line-height:24px;left:1301.9px;letter-spacing:0.23px;font-weight:700;color:#2564b7;">a6a1c431a1b5db3e</span>
<svg style="left:1532.3px;top:889.5px" width="23.4" height="23.4" viewBox="0 0 23.4 23.4"><g transform="translate(2 2) scale(1.0)" fill="none" stroke="#2564b7" stroke-width="2.0" stroke-linecap="round" stroke-linejoin="round"><path d="M8 3.2 L3.5 3.2 Q1 3.2 1 5.7 L1 16 Q1 18.4 3.5 18.4 L13.8 18.4 Q16.2 18.4 16.2 16 L16.2 11.5"/><path d="M11.5 1 L18.4 1 L18.4 7.8 M18.2 1.2 L8.5 11"/></g></svg>
<span class="t m" style="top:891.0px;font-size:23.4px;line-height:23.4px;left:1687.0px;color:#243042;">0</span>
<span class="t m" style="top:891.0px;font-size:23.4px;line-height:23.4px;left:1847.5px;color:#243042;">200</span>
<span class="t" style="top:943.9px;font-size:28px;line-height:28px;left:713.6px;letter-spacing:0.51px;-webkit-text-stroke:0.49px;color:#2564b7;">Feb 5, 2026</span>
<span class="t" style="top:947.1px;font-size:23px;line-height:23px;left:873.9px;-webkit-text-stroke:0.40px;color:#2564b7;">@</span>
<span class="t" style="top:943.9px;font-size:28px;line-height:28px;left:902.2px;letter-spacing:1.02px;-webkit-text-stroke:0.49px;color:#2564b7;">15:06:36.599+00:00</span>
<span class="t" style="top:946.4px;font-size:24px;line-height:24px;left:1301.9px;letter-spacing:0.93px;font-weight:700;color:#2564b7;">5923d9be3d1f594a</span>
<svg style="left:1538.6px;top:945.5px" width="23.4" height="23.4" viewBox="0 0 23.4 23.4"><g transform="translate(2 2) scale(1.0)" fill="none" stroke="#2564b7" stroke-width="2.0" stroke-linecap="round" stroke-linejoin="round"><path d="M8 3.2 L3.5 3.2 Q1 3.2 1 5.7 L1 16 Q1 18.4 3.5 18.4 L13.8 18.4 Q16.2 18.4 16.2 16 L16.2 11.5"/><path d="M11.5 1 L18.4 1 L18.4 7.8 M18.2 1.2 L8.5 11"/></g></svg>
<span class="t m" style="top:947.0px;font-size:23.4px;line-height:23.4px;left:1687.0px;color:#243042;">0</span>
<span class="t m" style="top:947.0px;font-size:23.4px;line-height:23.4px;left:1847.5px;color:#243042;">200</span>
<div class="b" style="left:653px;top:985.5px;width:1300px;height:56px;background:#e6eff8;"></div>
<span class="t" style="top:999.9px;font-size:28px;line-height:28px;left:713.6px;letter-spacing:0.51px;-webkit-text-stroke:0.49px;color:#2564b7;">Feb 5, 2026</span>
<span class="t" style="top:1003.1px;font-size:23px;line-height:23px;left:873.9px;-webkit-text-stroke:0.40px;color:#2564b7;">@</span>
<span class="t" style="top:999.9px;font-size:28px;line-height:28px;left:902.2px;letter-spacing:0.25px;-webkit-text-stroke:0.49px;color:#2564b7;">15:06:37.611+00:00</span>
<span class="t" style="top:1002.4px;font-size:24px;line-height:24px;left:1301.8px;letter-spacing:0.35px;font-weight:700;color:#2564b7;">6d1adccb77c4bcd3</span>
<svg style="left:1536.6px;top:1001.5px" width="23.4" height="23.4" viewBox="0 0 23.4 23.4"><g transform="translate(2 2) scale(1.0)" fill="none" stroke="#2564b7" stroke-width="2.0" stroke-linecap="round" stroke-linejoin="round"><path d="M8 3.2 L3.5 3.2 Q1 3.2 1 5.7 L1 16 Q1 18.4 3.5 18.4 L13.8 18.4 Q16.2 18.4 16.2 16 L16.2 11.5"/><path d="M11.5 1 L18.4 1 L18.4 7.8 M18.2 1.2 L8.5 11"/></g></svg>
<span class="t m" style="top:1003.0px;font-size:23.4px;line-height:23.4px;left:1687.0px;color:#243042;">0</span>
<span class="t" style="top:992.6px;font-size:37px;line-height:37px;left:1848.4px;-webkit-text-stroke:0.65px;color:#243042;-webkit-text-stroke:0;">-</span>
<span class="t" style="top:1055.9px;font-size:28px;line-height:28px;left:713.6px;letter-spacing:0.51px;-webkit-text-stroke:0.49px;color:#2564b7;">Feb 5, 2026</span>
<span class="t" style="top:1059.2px;font-size:23px;line-height:23px;left:873.9px;-webkit-text-stroke:0.40px;color:#2564b7;">@</span>
<span class="t" style="top:1055.9px;font-size:28px;line-height:28px;left:902.2px;letter-spacing:0.25px;-webkit-text-stroke:0.49px;color:#2564b7;">15:06:37.611+00:00</span>
<span class="t" style="top:1058.4px;font-size:24px;line-height:24px;left:1301.6px;letter-spacing:0.49px;font-weight:700;color:#2564b7;">d16893186df19dda</span>
<svg style="left:1533.1px;top:1057.5px" width="23.4" height="23.4" viewBox="0 0 23.4 23.4"><g transform="translate(2 2) scale(1.0)" fill="none" stroke="#2564b7" stroke-width="2.0" stroke-linecap="round" stroke-linejoin="round"><path d="M8 3.2 L3.5 3.2 Q1 3.2 1 5.7 L1 16 Q1 18.4 3.5 18.4 L13.8 18.4 Q16.2 18.4 16.2 16 L16.2 11.5"/><path d="M11.5 1 L18.4 1 L18.4 7.8 M18.2 1.2 L8.5 11"/></g></svg>
<span class="t m" style="top:1059.0px;font-size:23.4px;line-height:23.4px;left:1687.0px;color:#243042;">0</span>
<span class="t m" style="top:1059.0px;font-size:23.4px;line-height:23.4px;left:1847.5px;color:#243042;">200</span>
<span class="t" style="top:1111.9px;font-size:28px;line-height:28px;left:713.6px;letter-spacing:0.51px;-webkit-text-stroke:0.49px;color:#2564b7;">Feb 5, 2026</span>
<span class="t" style="top:1115.2px;font-size:23px;line-height:23px;left:873.9px;-webkit-text-stroke:0.40px;color:#2564b7;">@</span>
<span class="t" style="top:1111.9px;font-size:28px;line-height:28px;left:902.2px;letter-spacing:0.25px;-webkit-text-stroke:0.49px;color:#2564b7;">15:06:37.611+00:00</span>
<span class="t" style="top:1114.4px;font-size:24px;line-height:24px;left:1301.9px;letter-spacing:1.58px;font-weight:700;color:#2564b7;">ad470608c6265898</span>
<svg style="left:1550.0px;top:1113.5px" width="23.4" height="23.4" viewBox="0 0 23.4 23.4"><g transform="translate(2 2) scale(1.0)" fill="none" stroke="#2564b7" stroke-width="2.0" stroke-linecap="round" stroke-linejoin="round"><path d="M8 3.2 L3.5 3.2 Q1 3.2 1 5.7 L1 16 Q1 18.4 3.5 18.4 L13.8 18.4 Q16.2 18.4 16.2 16 L16.2 11.5"/><path d="M11.5 1 L18.4 1 L18.4 7.8 M18.2 1.2 L8.5 11"/></g></svg>
<span class="t m" style="top:1115.0px;font-size:23.4px;line-height:23.4px;left:1687.0px;color:#243042;">0</span>
<span class="t m" style="top:1115.0px;font-size:23.4px;line-height:23.4px;left:1847.5px;color:#243042;">200</span>
<span class="t" style="top:1167.9px;font-size:28px;line-height:28px;left:713.6px;letter-spacing:0.51px;-webkit-text-stroke:0.49px;color:#2564b7;">Feb 5, 2026</span>
<span class="t" style="top:1171.2px;font-size:23px;line-height:23px;left:873.9px;-webkit-text-stroke:0.40px;color:#2564b7;">@</span>
<span class="t" style="top:1167.9px;font-size:28px;line-height:28px;left:902.2px;letter-spacing:0.25px;-webkit-text-stroke:0.49px;color:#2564b7;">15:06:37.611+00:00</span>
<span class="t" style="top:1170.4px;font-size:24px;line-height:24px;left:1301.6px;letter-spacing:0.77px;font-weight:700;color:#2564b7;">c7e9487ba4d7d3c7</span>
<svg style="left:1540.1px;top:1169.5px" width="23.4" height="23.4" viewBox="0 0 23.4 23.4"><g transform="translate(2 2) scale(1.0)" fill="none" stroke="#2564b7" stroke-width="2.0" stroke-linecap="round" stroke-linejoin="round"><path d="M8 3.2 L3.5 3.2 Q1 3.2 1 5.7 L1 16 Q1 18.4 3.5 18.4 L13.8 18.4 Q16.2 18.4 16.2 16 L16.2 11.5"/><path d="M11.5 1 L18.4 1 L18.4 7.8 M18.2 1.2 L8.5 11"/></g></svg>
<span class="t m" style="top:1171.0px;font-size:23.4px;line-height:23.4px;left:1687.0px;color:#243042;">0</span>
<span class="t m" style="top:1171.0px;font-size:23.4px;line-height:23.4px;left:1847.5px;color:#243042;">200</span>
<span class="t" style="top:1223.9px;font-size:28px;line-height:28px;left:713.6px;letter-spacing:0.51px;-webkit-text-stroke:0.49px;color:#2564b7;">Feb 5, 2026</span>
<span class="t" style="top:1227.2px;font-size:23px;line-height:23px;left:873.9px;-webkit-text-stroke:0.40px;color:#2564b7;">@</span>
<span class="t" style="top:1223.9px;font-size:28px;line-height:28px;left:902.2px;letter-spacing:0.98px;-webkit-text-stroke:0.49px;color:#2564b7;">15:06:34.329+00:00</span>
<span class="t" style="top:1226.4px;font-size:24px;line-height:24px;left:1301.2px;letter-spacing:1.23px;font-weight:700;color:#2564b7;">1e0c03b3ef0b0e8c</span>
<svg style="left:1540.1px;top:1225.5px" width="23.4" height="23.4" viewBox="0 0 23.4 23.4"><g transform="translate(2 2) scale(1.0)" fill="none" stroke="#2564b7" stroke-width="2.0" stroke-linecap="round" stroke-linejoin="round"><path d="M8 3.2 L3.5 3.2 Q1 3.2 1 5.7 L1 16 Q1 18.4 3.5 18.4 L13.8 18.4 Q16.2 18.4 16.2 16 L16.2 11.5"/><path d="M11.5 1 L18.4 1 L18.4 7.8 M18.2 1.2 L8.5 11"/></g></svg>
<span class="t m" style="top:1227.0px;font-size:23.4px;line-height:23.4px;left:1687.0px;color:#243042;">0</span>
<span class="t" style="top:1216.7px;font-size:37px;line-height:37px;left:1848.4px;-webkit-text-stroke:0.65px;color:#243042;-webkit-text-stroke:0;">-</span>
<span class="t" style="top:1279.9px;font-size:28px;line-height:28px;left:713.6px;letter-spacing:0.51px;-webkit-text-stroke:0.49px;color:#2564b7;">Feb 5, 2026</span>
<span class="t" style="top:1283.2px;font-size:23px;line-height:23px;left:873.9px;-webkit-text-stroke:0.40px;color:#2564b7;">@</span>
<span class="t" style="top:1279.9px;font-size:28px;line-height:28px;left:902.2px;letter-spacing:0.98px;-webkit-text-stroke:0.49px;color:#2564b7;">15:06:34.329+00:00</span>
<span class="t" style="top:1282.4px;font-size:24px;line-height:24px;left:1301.9px;letter-spacing:0.87px;font-weight:700;color:#2564b7;">a744a10b4bc73d84</span>
<svg style="left:1542.6px;top:1281.5px" width="23.4" height="23.4" viewBox="0 0 23.4 23.4"><g transform="translate(2 2) scale(1.0)" fill="none" stroke="#2564b7" stroke-width="2.0" stroke-linecap="round" stroke-linejoin="round"><path d="M8 3.2 L3.5 3.2 Q1 3.2 1 5.7 L1 16 Q1 18.4 3.5 18.4 L13.8 18.4 Q16.2 18.4 16.2 16 L16.2 11.5"/><path d="M11.5 1 L18.4 1 L18.4 7.8 M18.2 1.2 L8.5 11"/></g></svg>
<span class="t m" style="top:1283.0px;font-size:23.4px;line-height:23.4px;left:1687.0px;color:#243042;">0</span>
<span class="t" style="top:1272.7px;font-size:37px;line-height:37px;left:1848.4px;-webkit-text-stroke:0.65px;color:#243042;-webkit-text-stroke:0;">-</span>
<span class="t" style="top:1335.9px;font-size:28px;line-height:28px;left:713.6px;letter-spacing:0.51px;-webkit-text-stroke:0.49px;color:#2564b7;">Feb 5, 2026</span>
<span class="t" style="top:1339.2px;font-size:23px;line-height:23px;left:873.9px;-webkit-text-stroke:0.40px;color:#2564b7;">@</span>
<span class="t" style="top:1335.9px;font-size:28px;line-height:28px;left:902.2px;letter-spacing:0.98px;-webkit-text-stroke:0.49px;color:#2564b7;">15:06:34.329+00:00</span>
<span class="t" style="top:1338.4px;font-size:24px;line-height:24px;left:1301.0px;letter-spacing:0.65px;font-weight:700;color:#2564b7;">bd6ac732cdb9d7c5</span>
<svg style="left:1540.6px;top:1337.5px" width="23.4" height="23.4" viewBox="0 0 23.4 23.4"><g transform="translate(2 2) scale(1.0)" fill="none" stroke="#2564b7" stroke-width="2.0" stroke-linecap="round" stroke-linejoin="round"><path d="M8 3.2 L3.5 3.2 Q1 3.2 1 5.7 L1 16 Q1 18.4 3.5 18.4 L13.8 18.4 Q16.2 18.4 16.2 16 L16.2 11.5"/><path d="M11.5 1 L18.4 1 L18.4 7.8 M18.2 1.2 L8.5 11"/></g></svg>
<span class="t m" style="top:1339.0px;font-size:23.4px;line-height:23.4px;left:1687.0px;color:#243042;">0</span>
<span class="t" style="top:1328.7px;font-size:37px;line-height:37px;left:1848.4px;-webkit-text-stroke:0.65px;color:#243042;-webkit-text-stroke:0;">-</span>
<span class="t" style="top:1391.9px;font-size:28px;line-height:28px;left:713.6px;letter-spacing:0.51px;-webkit-text-stroke:0.49px;color:#2564b7;">Feb 5, 2026</span>
<span class="t" style="top:1395.2px;font-size:23px;line-height:23px;left:873.9px;-webkit-text-stroke:0.40px;color:#2564b7;">@</span>
<span class="t" style="top:1391.9px;font-size:28px;line-height:28px;left:902.2px;letter-spacing:0.98px;-webkit-text-stroke:0.49px;color:#2564b7;">15:06:34.329+00:00</span>
<span class="t" style="top:1394.4px;font-size:24px;line-height:24px;left:1301.6px;letter-spacing:0.72px;font-weight:700;color:#2564b7;">0e1c63ab4857bf71</span>
<svg style="left:1533.1px;top:1393.5px" width="23.4" height="23.4" viewBox="0 0 23.4 23.4"><g transform="translate(2 2) scale(1.0)" fill="none" stroke="#2564b7" stroke-width="2.0" stroke-linecap="round" stroke-linejoin="round"><path d="M8 3.2 L3.5 3.2 Q1 3.2 1 5.7 L1 16 Q1 18.4 3.5 18.4 L13.8 18.4 Q16.2 18.4 16.2 16 L16.2 11.5"/><path d="M11.5 1 L18.4 1 L18.4 7.8 M18.2 1.2 L8.5 11"/></g></svg>
<span class="t m" style="top:1395.0px;font-size:23.4px;line-height:23.4px;left:1687.0px;color:#243042;">0</span>
<span class="t" style="top:1384.7px;font-size:37px;line-height:37px;left:1848.4px;-webkit-text-stroke:0.65px;color:#243042;-webkit-text-stroke:0;">-</span>
<span class="t" style="top:1447.9px;font-size:28px;line-height:28px;left:713.6px;letter-spacing:0.51px;-webkit-text-stroke:0.49px;color:#2564b7;">Feb 5, 2026</span>
<span class="t" style="top:1451.2px;font-size:23px;line-height:23px;left:873.9px;-webkit-text-stroke:0.40px;color:#2564b7;">@</span>
<span class="t" style="top:1447.9px;font-size:28px;line-height:28px;left:902.2px;letter-spacing:0.98px;-webkit-text-stroke:0.49px;color:#2564b7;">15:06:34.329+00:00</span>
<span class="t" style="top:1450.4px;font-size:24px;line-height:24px;left:1301.6px;letter-spacing:0.94px;font-weight:700;color:#2564b7;">754c4d7187f39f74</span>
<svg style="left:1530.1px;top:1449.5px" width="23.4" height="23.4" viewBox="0 0 23.4 23.4"><g transform="translate(2 2) scale(1.0)" fill="none" stroke="#2564b7" stroke-width="2.0" stroke-linecap="round" stroke-linejoin="round"><path d="M8 3.2 L3.5 3.2 Q1 3.2 1 5.7 L1 16 Q1 18.4 3.5 18.4 L13.8 18.4 Q16.2 18.4 16.2 16 L16.2 11.5"/><path d="M11.5 1 L18.4 1 L18.4 7.8 M18.2 1.2 L8.5 11"/></g></svg>
<span class="t m" style="top:1451.0px;font-size:23.4px;line-height:23.4px;left:1687.0px;color:#243042;">0</span>
<span class="t" style="top:1440.7px;font-size:37px;line-height:37px;left:1848.4px;-webkit-text-stroke:0.65px;color:#243042;-webkit-text-stroke:0;">-</span>
<span class="t" style="top:1503.9px;font-size:28px;line-height:28px;left:713.6px;letter-spacing:0.51px;-webkit-text-stroke:0.49px;color:#2564b7;">Feb 5, 2026</span>
<span class="t" style="top:1507.2px;font-size:23px;line-height:23px;left:873.9px;-webkit-text-stroke:0.40px;color:#2564b7;">@</span>
<span class="t" style="top:1503.9px;font-size:28px;line-height:28px;left:902.2px;letter-spacing:0.48px;-webkit-text-stroke:0.49px;color:#2564b7;">15:06:37.610+00:00</span>
<span class="t" style="top:1506.4px;font-size:24px;line-height:24px;left:1301.6px;letter-spacing:0.78px;font-weight:700;color:#2564b7;">e69b066761d7087c</span>
<svg style="left:1539.1px;top:1505.5px" width="23.4" height="23.4" viewBox="0 0 23.4 23.4"><g transform="translate(2 2) scale(1.0)" fill="none" stroke="#2564b7" stroke-width="2.0" stroke-linecap="round" stroke-linejoin="round"><path d="M8 3.2 L3.5 3.2 Q1 3.2 1 5.7 L1 16 Q1 18.4 3.5 18.4 L13.8 18.4 Q16.2 18.4 16.2 16 L16.2 11.5"/><path d="M11.5 1 L18.4 1 L18.4 7.8 M18.2 1.2 L8.5 11"/></g></svg>
<span class="t m" style="top:1507.0px;font-size:23.4px;line-height:23.4px;left:1687.0px;color:#243042;">0</span>
<span class="t m" style="top:1507.0px;font-size:23.4px;line-height:23.4px;left:1847.5px;color:#243042;">200</span>
<span class="t" style="top:1559.9px;font-size:28px;line-height:28px;left:713.6px;letter-spacing:0.51px;-webkit-text-stroke:0.49px;color:#2564b7;">Feb 5, 2026</span>
<span class="t" style="top:1563.2px;font-size:23px;line-height:23px;left:873.9px;-webkit-text-stroke:0.40px;color:#2564b7;">@</span>
<span class="t" style="top:1559.9px;font-size:28px;line-height:28px;left:902.2px;letter-spacing:1.03px;-webkit-text-stroke:0.49px;color:#2564b7;">15:06:36.598+00:00</span>
<span class="t" style="top:1562.4px;font-size:24px;line-height:24px;left:1301.6px;letter-spacing:0.55px;font-weight:700;color:#2564b7;">e6db9d78d1ba5aef</span>
<svg style="left:1535.1px;top:1561.5px" width="23.4" height="23.4" viewBox="0 0 23.4 23.4"><g transform="translate(2 2) scale(1.0)" fill="none" stroke="#2564b7" stroke-width="2.0" stroke-linecap="round" stroke-linejoin="round"><path d="M8 3.2 L3.5 3.2 Q1 3.2 1 5.7 L1 16 Q1 18.4 3.5 18.4 L13.8 18.4 Q16.2 18.4 16.2 16 L16.2 11.5"/><path d="M11.5 1 L18.4 1 L18.4 7.8 M18.2 1.2 L8.5 11"/></g></svg>
<span class="t m" style="top:1563.0px;font-size:23.4px;line-height:23.4px;left:1687.0px;color:#243042;">0</span>
<span class="t" style="top:1552.7px;font-size:37px;line-height:37px;left:1848.4px;-webkit-text-stroke:0.65px;color:#243042;-webkit-text-stroke:0;">-</span>
<span class="t" style="top:1615.9px;font-size:28px;line-height:28px;left:713.6px;letter-spacing:0.51px;-webkit-text-stroke:0.49px;color:#2564b7;">Feb 5, 2026</span>
<span class="t" style="top:1619.2px;font-size:23px;line-height:23px;left:873.9px;-webkit-text-stroke:0.40px;color:#2564b7;">@</span>
<span class="t" style="top:1615.9px;font-size:28px;line-height:28px;left:902.2px;letter-spacing:0.48px;-webkit-text-stroke:0.49px;color:#2564b7;">15:06:37.610+00:00</span>
<span class="t" style="top:1618.4px;font-size:24px;line-height:24px;left:1301.9px;letter-spacing:0.82px;font-weight:700;color:#2564b7;">883dfc1e1d8efbe8</span>
<svg style="left:1530.6px;top:1617.5px" width="23.4" height="23.4" viewBox="0 0 23.4 23.4"><g transform="translate(2 2) scale(1.0)" fill="none" stroke="#2564b7" stroke-width="2.0" stroke-linecap="round" stroke-linejoin="round"><path d="M8 3.2 L3.5 3.2 Q1 3.2 1 5.7 L1 16 Q1 18.4 3.5 18.4 L13.8 18.4 Q16.2 18.4 16.2 16 L16.2 11.5"/><path d="M11.5 1 L18.4 1 L18.4 7.8 M18.2 1.2 L8.5 11"/></g></svg>
<span class="t m" style="top:1619.0px;font-size:23.4px;line-height:23.4px;left:1687.0px;color:#243042;">0</span>
<span class="t m" style="top:1619.0px;font-size:23.4px;line-height:23.4px;left:1847.5px;color:#243042;">200</span>
<span class="t" style="top:1671.9px;font-size:28px;line-height:28px;left:713.6px;letter-spacing:0.51px;-webkit-text-stroke:0.49px;color:#2564b7;">Feb 5, 2026</span>
<span class="t" style="top:1675.2px;font-size:23px;line-height:23px;left:873.9px;-webkit-text-stroke:0.40px;color:#2564b7;">@</span>
<span class="t" style="top:1671.9px;font-size:28px;line-height:28px;left:902.2px;letter-spacing:0.48px;-webkit-text-stroke:0.49px;color:#2564b7;">15:06:37.610+00:00</span>
<span class="t" style="top:1674.4px;font-size:24px;line-height:24px;left:1301.8px;letter-spacing:0.76px;font-weight:700;color:#2564b7;">6c4134edb93b79c7</span>
<svg style="left:1540.1px;top:1673.5px" width="23.4" height="23.4" viewBox="0 0 23.4 23.4"><g transform="translate(2 2) scale(1.0)" fill="none" stroke="#2564b7" stroke-width="2.0" stroke-linecap="round" stroke-linejoin="round"><path d="M8 3.2 L3.5 3.2 Q1 3.2 1 5.7 L1 16 Q1 18.4 3.5 18.4 L13.8 18.4 Q16.2 18.4 16.2 16 L16.2 11.5"/><path d="M11.5 1 L18.4 1 L18.4 7.8 M18.2 1.2 L8.5 11"/></g></svg>
<span class="t m" style="top:1675.0px;font-size:23.4px;line-height:23.4px;left:1687.0px;color:#243042;">0</span>
<span class="t m" style="top:1675.0px;font-size:23.4px;line-height:23.4px;left:1847.5px;color:#243042;">200</span>
<span class="t" style="top:1727.9px;font-size:28px;line-height:28px;left:713.6px;letter-spacing:0.51px;-webkit-text-stroke:0.49px;color:#2564b7;">Feb 5, 2026</span>
<span class="t" style="top:1731.2px;font-size:23px;line-height:23px;left:873.9px;-webkit-text-stroke:0.40px;color:#2564b7;">@</span>
<span class="t" style="top:1727.9px;font-size:28px;line-height:28px;left:902.2px;letter-spacing:1.03px;-webkit-text-stroke:0.49px;color:#2564b7;">15:06:36.598+00:00</span>
<span class="t" style="top:1730.4px;font-size:24px;line-height:24px;left:1301.8px;letter-spacing:0.97px;font-weight:700;color:#2564b7;">246bd42fa4190aba</span>
<svg style="left:1539.1px;top:1729.5px" width="23.4" height="23.4" viewBox="0 0 23.4 23.4"><g transform="translate(2 2) scale(1.0)" fill="none" stroke="#2564b7" stroke-width="2.0" stroke-linecap="round" stroke-linejoin="round"><path d="M8 3.2 L3.5 3.2 Q1 3.2 1 5.7 L1 16 Q1 18.4 3.5 18.4 L13.8 18.4 Q16.2 18.4 16.2 16 L16.2 11.5"/><path d="M11.5 1 L18.4 1 L18.4 7.8 M18.2 1.2 L8.5 11"/></g></svg>
<span class="t m" style="top:1731.0px;font-size:23.4px;line-height:23.4px;left:1687.0px;color:#243042;">0</span>
<span class="t" style="top:1720.7px;font-size:37px;line-height:37px;left:1848.4px;-webkit-text-stroke:0.65px;color:#243042;-webkit-text-stroke:0;">-</span>
<span class="t" style="top:1783.9px;font-size:28px;line-height:28px;left:713.6px;letter-spacing:0.51px;-webkit-text-stroke:0.49px;color:#2564b7;">Feb 5, 2026</span>
<span class="t" style="top:1787.2px;font-size:23px;line-height:23px;left:873.9px;-webkit-text-stroke:0.40px;color:#2564b7;">@</span>
<span class="t" style="top:1783.9px;font-size:28px;line-height:28px;left:902.2px;letter-spacing:0.74px;-webkit-text-stroke:0.49px;color:#2564b7;">15:06:37.602+00:00</span>
<span class="t" style="top:1786.4px;font-size:24px;line-height:24px;left:1301.6px;letter-spacing:0.35px;font-weight:700;color:#2564b7;">76ac6e1f245e71b1</span>
<svg style="left:1526.2px;top:1785.5px" width="23.4" height="23.4" viewBox="0 0 23.4 23.4"><g transform="translate(2 2) scale(1.0)" fill="none" stroke="#2564b7" stroke-width="2.0" stroke-linecap="round" stroke-linejoin="round"><path d="M8 3.2 L3.5 3.2 Q1 3.2 1 5.7 L1 16 Q1 18.4 3.5 18.4 L13.8 18.4 Q16.2 18.4 16.2 16 L16.2 11.5"/><path d="M11.5 1 L18.4 1 L18.4 7.8 M18.2 1.2 L8.5 11"/></g></svg>
<span class="t m" style="top:1787.0px;font-size:23.4px;line-height:23.4px;left:1687.0px;color:#243042;">0</span>
<span class="t" style="top:1776.7px;font-size:37px;line-height:37px;left:1848.4px;-webkit-text-stroke:0.65px;color:#243042;-webkit-text-stroke:0;">-</span>
<span class="t" style="top:1839.9px;font-size:28px;line-height:28px;left:713.6px;letter-spacing:0.51px;-webkit-text-stroke:0.49px;color:#2564b7;">Feb 5, 2026</span>
<span class="t" style="top:1843.2px;font-size:23px;line-height:23px;left:873.9px;-webkit-text-stroke:0.40px;color:#2564b7;">@</span>
<span class="t" style="top:1839.9px;font-size:28px;line-height:28px;left:902.2px;letter-spacing:0.71px;-webkit-text-stroke:0.49px;color:#2564b7;">15:06:37.599+00:00</span>
<span class="t" style="top:1842.4px;font-size:24px;line-height:24px;left:1301.6px;letter-spacing:0.94px;font-weight:700;color:#2564b7;">0256173dce5e6b35</span>
<svg style="left:1541.6px;top:1841.5px" width="23.4" height="23.4" viewBox="0 0 23.4 23.4"><g transform="translate(2 2) scale(1.0)" fill="none" stroke="#2564b7" stroke-width="2.0" stroke-linecap="round" stroke-linejoin="round"><path d="M8 3.2 L3.5 3.2 Q1 3.2 1 5.7 L1 16 Q1 18.4 3.5 18.4 L13.8 18.4 Q16.2 18.4 16.2 16 L16.2 11.5"/><path d="M11.5 1 L18.4 1 L18.4 7.8 M18.2 1.2 L8.5 11"/></g></svg>
<span class="t m" style="top:1843.0px;font-size:23.4px;line-height:23.4px;left:1687.0px;color:#243042;">0</span>
<span class="t" style="top:1832.7px;font-size:37px;line-height:37px;left:1848.4px;-webkit-text-stroke:0.65px;color:#243042;-webkit-text-stroke:0;">-</span>
<span class="t" style="top:1895.9px;font-size:28px;line-height:28px;left:713.6px;letter-spacing:0.51px;-webkit-text-stroke:0.49px;color:#2564b7;">Feb 5, 2026</span>
<span class="t" style="top:1899.2px;font-size:23px;line-height:23px;left:873.9px;-webkit-text-stroke:0.40px;color:#2564b7;">@</span>
<span class="t" style="top:1895.9px;font-size:28px;line-height:28px;left:902.2px;letter-spacing:0.71px;-webkit-text-stroke:0.49px;color:#2564b7;">15:06:37.595+00:00</span>
<span class="t" style="top:1898.4px;font-size:24px;line-height:24px;left:1301.6px;letter-spacing:0.87px;font-weight:700;color:#2564b7;">723531d4f9dd66d7</span>
<svg style="left:1537.6px;top:1897.5px" width="23.4" height="23.4" viewBox="0 0 23.4 23.4"><g transform="translate(2 2) scale(1.0)" fill="none" stroke="#2564b7" stroke-width="2.0" stroke-linecap="round" stroke-linejoin="round"><path d="M8 3.2 L3.5 3.2 Q1 3.2 1 5.7 L1 16 Q1 18.4 3.5 18.4 L13.8 18.4 Q16.2 18.4 16.2 16 L16.2 11.5"/><path d="M11.5 1 L18.4 1 L18.4 7.8 M18.2 1.2 L8.5 11"/></g></svg>
<span class="t m" style="top:1899.0px;font-size:23.4px;line-height:23.4px;left:1687.0px;color:#243042;">0</span>
<span class="t" style="top:1888.7px;font-size:37px;line-height:37px;left:1848.4px;-webkit-text-stroke:0.65px;color:#243042;-webkit-text-stroke:0;">-</span>
<div class="b" style="left:1918px;top:0px;width:1920px;height:1912px;background:#fff;border-left:2px solid #c9cdd5;box-shadow:0 0 130px 10px rgba(65,78,101,.06),0 40px 64px 0 rgba(65,78,101,.1),0 24px 32px 0 rgba(65,78,101,.1),0 16px 16px 0 rgba(65,78,101,.1),0 8px 8px 0 rgba(65,78,101,.1),0 4px 4px 0 rgba(65,78,101,.1),0 2px 2px 0 rgba(65,78,101,.1);"></div>
<span class="t" style="top:54.9px;font-size:48px;line-height:48px;left:1967.9px;letter-spacing:2.04px;-webkit-text-stroke:0.84px;color:#1a1f2b;">load-generator: user_get_recommendations</span>
<div class="b" style="left:1968.5px;top:124.5px;width:702.5px;height:45.4px;border:2px solid #cfd2d9;border-radius:6px;"></div>
<span class="t" style="top:133.1px;font-size:28px;line-height:28px;left:1985.8px;letter-spacing:0.87px;-webkit-text-stroke:0.49px;color:#243042;">Trace ID: e0354ac725f9892cb30a3838aff8b3ca</span>
<svg style="left:2628px;top:133px" width="28" height="28" viewBox="0 0 28 28"><g fill="none" stroke="#243042" stroke-width="2" stroke-linejoin="round"><path d="M7.5 2.5 L18.5 2.5 L24.5 8.5 L24.5 22 L7.5 22 Z"/><path d="M18.3 2.8 L18.3 8.7 L24.2 8.7" stroke-width="1.6"/><path d="M4 6.5 L4 25.5 L20 25.5"/></g></svg>
<div class="b" style="left:3339.3px;top:78.2px;width:242px;height:63.6px;border:2px solid #2564b7;border-radius:9px;"></div>
<span class="t" style="top:96.1px;font-size:28px;line-height:28px;left:3366.1px;letter-spacing:0.54px;-webkit-text-stroke:0.49px;color:#2564b7;">View raw trace</span>
<span class="t" style="top:81.8px;font-size:28px;line-height:28px;left:3597.9px;letter-spacing:-0.04px;font-weight:700;color:#2564b7;">Open full</span>
<span class="t" style="top:109.9px;font-size:28px;line-height:28px;left:3597.2px;letter-spacing:0.67px;font-weight:700;color:#2564b7;">page</span>
<svg style="left:3674px;top:113.8px" width="23.4" height="23.4" viewBox="0 0 23.4 23.4"><g transform="translate(2 2) scale(1.0)" fill="none" stroke="#2564b7" stroke-width="2.2" stroke-linecap="round" stroke-linejoin="round"><path d="M8 3.2 L3.5 3.2 Q1 3.2 1 5.7 L1 16 Q1 18.4 3.5 18.4 L13.8 18.4 Q16.2 18.4 16.2 16 L16.2 11.5"/><path d="M11.5 1 L18.4 1 L18.4 7.8 M18.2 1.2 L8.5 11"/></g></svg>
<svg style="left:3784px;top:28px" width="28" height="28" viewBox="0 0 28 28"><path d="M4.5 4.8 L23.5 23.8 M23.5 4.8 L4.5 23.8" fill="none" stroke="#243042" stroke-width="2.2" stroke-linecap="round"/></svg>
<div class="b" style="left:3822.3px;top:175.8px;width:11.6px;height:1659.5px;background:#a5abb5;border-radius:6px;"></div>
<span class="t" style="top:248.9px;font-size:28px;line-height:28px;left:2004.1px;letter-spacing:0.70px;-webkit-text-stroke:0.49px;color:#243042;">Timeline</span>
<div class="b" style="left:2178px;top:245px;width:65px;height:39.3px;background:#d5dae6;border-radius:6px;"></div>
<span class="t" style="top:253.1px;font-size:24px;line-height:24px;left:2195.2px;letter-spacing:3.50px;font-weight:700;color:#000;">25</span>
<span class="t" style="top:248.9px;font-size:28px;line-height:28px;left:2249.6px;letter-spacing:0.62px;-webkit-text-stroke:0.49px;color:#243042;">Span list</span>
<div class="b" style="left:2427px;top:245px;width:50.8px;height:39.3px;background:#d5dae6;border-radius:6px;"></div>
<span class="t" style="top:253.1px;font-size:24px;line-height:24px;left:2444.7px;font-weight:700;color:#000;">8</span>
<span class="t" style="top:248.9px;font-size:28px;line-height:28px;left:2483.8px;letter-spacing:0.56px;-webkit-text-stroke:0.49px;color:#2564b7;">Related logs</span>
<div class="b" style="left:1971.8px;top:306.5px;width:1791.7px;height:2px;background:#d3d6dc;"></div>
<div class="b" style="left:2395px;top:304.7px;width:281.8px;height:3.8px;background:#2564b7;"></div>
<div class="b" style="left:0;top:0;width:3838px;height:1132px;overflow:hidden;">
<div class="b" style="left:1972.4px;top:313.2px;width:1768.6px;height:900px;border:2px solid #d3d6dc;border-radius:9px;"></div>
<div class="b" style="left:3752.3px;top:319px;width:11.2px;height:520.5px;background:#a5abb5;border-radius:6px;"></div>
<span class="t" style="top:350.8px;font-size:36px;line-height:36px;left:2004.5px;letter-spacing:0.09px;font-weight:700;color:#1a1f2b;">Related logs</span>
<span class="t" style="top:396.9px;font-size:28px;line-height:28px;left:2006.7px;letter-spacing:0.70px;-webkit-text-stroke:0.49px;color:#5f6470;">View logs related with this trace</span>
<svg style="left:2015.8px;top:499.3px" width="28" height="18" viewBox="0 0 28 18"><path d="M3 3 L14.0 15 L25 3" fill="none" stroke="#243042" stroke-width="2.4" stroke-linecap="round" stroke-linejoin="round"/></svg><span class="t" style="top:472.5px;font-size:28px;line-height:28px;left:2061.1px;letter-spacing:1.70px;font-weight:700;color:#243042;">Dataset:</span><span class="t" style="top:472.5px;font-size:28px;line-height:28px;left:2196.9px;letter-spacing:1.09px;-webkit-text-stroke:0.49px;color:#243042;">logs-otel-v1*</span><span class="t" style="top:521.5px;font-size:24px;line-height:24px;left:2061.1px;letter-spacing:0.60px;-webkit-text-stroke:0.42px;color:#5f6470;">10 recent results</span><div class="b" style="left:2415.7px;top:475.8px;width:379.7px;height:63.4px;border:2px solid #2564b7;border-radius:9px;"></div><svg style="left:2443px;top:492.8px" width="28.8" height="28.8" viewBox="0 0 28.8 28.8"><g transform="translate(2 2) scale(1.2783505154639176)" fill="none" stroke="#2564b7" stroke-width="1.7991935483870964" stroke-linecap="round" stroke-linejoin="round"><path d="M8 3.2 L3.5 3.2 Q1 3.2 1 5.7 L1 16 Q1 18.4 3.5 18.4 L13.8 18.4 Q16.2 18.4 16.2 16 L16.2 11.5"/><path d="M11.5 1 L18.4 1 L18.4 7.8 M18.2 1.2 L8.5 11"/></g></svg><span class="t" style="top:493.7px;font-size:28px;line-height:28px;left:2489.3px;letter-spacing:0.30px;-webkit-text-stroke:0.49px;color:#2564b7;">View in Discover Logs</span>
<span class="t" style="top:606.5px;font-size:24px;line-height:24px;left:2140.5px;letter-spacing:0.17px;font-weight:700;color:#1a1f2b;">Time</span>
<svg style="left:2206px;top:607px" width="26" height="24" viewBox="0 0 26 24"><path d="M12.9 2 L12.9 19.5 M4 11.5 L12.9 20 L21.8 11.5" fill="none" stroke="#1a1f2b" stroke-width="2.2" stroke-linecap="round" stroke-linejoin="round"/></svg>
<span class="t" style="top:606.5px;font-size:24px;line-height:24px;left:2441.0px;letter-spacing:0.23px;font-weight:700;color:#1a1f2b;">Level</span>
<span class="t" style="top:606.5px;font-size:24px;line-height:24px;left:2613.5px;letter-spacing:0.15px;font-weight:700;color:#1a1f2b;">Message</span>
<span class="t" style="top:606.5px;font-size:24px;line-height:24px;left:3260.8px;letter-spacing:-0.08px;font-weight:700;color:#1a1f2b;">Span ID</span>
<div class="b" style="left:2037.8px;top:653px;width:1638.2px;height:2px;background:#d3d6dc;"></div>
<svg style="left:2061.2px;top:692.5px" width="18" height="29" viewBox="0 0 18 29"><path d="M3 3 L15 14.5 L3 26" fill="none" stroke="#243042" stroke-width="2.4" stroke-linecap="round" stroke-linejoin="round"/></svg>
<span class="t m" style="top:677.7px;font-size:24px;line-height:24px;left:2138.9px;color:#243042;">2/5/2026, 11:06:37</span><span class="t m" style="top:712.9px;font-size:24px;line-height:24px;left:2138.4px;color:#243042;">PM</span>
<div class="b" style="left:2441.9px;top:686.9px;width:91px;height:40px;background:#d5dae6;border-radius:6px;"></div><span class="t" style="top:695.6px;font-size:24px;line-height:24px;left:2459.0px;letter-spacing:-0.17px;font-weight:700;color:#000;">INFO</span>
<span class="t" style="top:692.8px;font-size:28px;line-height:28px;left:2612.9px;letter-spacing:1.06px;-webkit-text-stroke:0.49px;color:#243042;">Product Found</span>
<span class="t m u" style="top:696.0px;font-size:24px;line-height:24px;left:3259.9px;color:#2564b7;">3ada4af92e475085</span>
<div class="b" style="left:2037.8px;top:759px;width:1638.2px;height:2px;background:#d3d6dc;"></div>
<svg style="left:2061.2px;top:798.5px" width="18" height="29" viewBox="0 0 18 29"><path d="M3 3 L15 14.5 L3 26" fill="none" stroke="#243042" stroke-width="2.4" stroke-linecap="round" stroke-linejoin="round"/></svg>
<span class="t m" style="top:783.7px;font-size:24px;line-height:24px;left:2138.9px;color:#243042;">2/5/2026, 11:06:37</span><span class="t m" style="top:818.9px;font-size:24px;line-height:24px;left:2138.4px;color:#243042;">PM</span>
<div class="b" style="left:2441.9px;top:792.9px;width:91px;height:40px;background:#d5dae6;border-radius:6px;"></div><span class="t" style="top:801.6px;font-size:24px;line-height:24px;left:2459.0px;letter-spacing:-0.17px;font-weight:700;color:#000;">INFO</span>
<span class="t" style="top:798.8px;font-size:28px;line-height:28px;left:2612.9px;letter-spacing:1.06px;-webkit-text-stroke:0.49px;color:#243042;">Product Found</span>
<span class="t m u" style="top:802.0px;font-size:24px;line-height:24px;left:3259.9px;color:#2564b7;">adea8a253799f5d6</span>
<div class="b" style="left:2037.8px;top:865px;width:1638.2px;height:2px;background:#d3d6dc;"></div>
<svg style="left:2061.2px;top:904.5px" width="18" height="29" viewBox="0 0 18 29"><path d="M3 3 L15 14.5 L3 26" fill="none" stroke="#243042" stroke-width="2.4" stroke-linecap="round" stroke-linejoin="round"/></svg>
<span class="t m" style="top:889.7px;font-size:24px;line-height:24px;left:2138.9px;color:#243042;">2/5/2026, 11:06:37</span><span class="t m" style="top:924.9px;font-size:24px;line-height:24px;left:2138.4px;color:#243042;">PM</span>
<div class="b" style="left:2441.9px;top:898.9px;width:91px;height:40px;background:#d5dae6;border-radius:6px;"></div><span class="t" style="top:907.6px;font-size:24px;line-height:24px;left:2459.0px;letter-spacing:-0.17px;font-weight:700;color:#000;">INFO</span>
<span class="t" style="top:904.8px;font-size:28px;line-height:28px;left:2612.9px;letter-spacing:1.06px;-webkit-text-stroke:0.49px;color:#243042;">Product Found</span>
<span class="t m u" style="top:908.0px;font-size:24px;line-height:24px;left:3259.9px;color:#2564b7;">0295026446a904a2</span>
<div class="b" style="left:2037.8px;top:971px;width:1638.2px;height:2px;background:#d3d6dc;"></div>
<svg style="left:2061.2px;top:1010.5px" width="18" height="29" viewBox="0 0 18 29"><path d="M3 3 L15 14.5 L3 26" fill="none" stroke="#243042" stroke-width="2.4" stroke-linecap="round" stroke-linejoin="round"/></svg>
<span class="t m" style="top:995.7px;font-size:24px;line-height:24px;left:2138.9px;color:#243042;">2/5/2026, 11:06:37</span><span class="t m" style="top:1030.9px;font-size:24px;line-height:24px;left:2138.4px;color:#243042;">PM</span>
<div class="b" style="left:2441.9px;top:1004.9px;width:91px;height:40px;background:#d5dae6;border-radius:6px;"></div><span class="t" style="top:1013.6px;font-size:24px;line-height:24px;left:2459.0px;letter-spacing:-0.17px;font-weight:700;color:#000;">INFO</span>
<span class="t" style="top:1010.8px;font-size:28px;line-height:28px;left:2612.9px;letter-spacing:1.06px;-webkit-text-stroke:0.49px;color:#243042;">Product Found</span>
<span class="t m u" style="top:1014.0px;font-size:24px;line-height:24px;left:3259.9px;color:#2564b7;">0256173dce5e6b35</span>
<div class="b" style="left:2037.8px;top:1077px;width:1638.2px;height:2px;background:#d3d6dc;"></div>
<svg style="left:2061.2px;top:1116.5px" width="18" height="29" viewBox="0 0 18 29"><path d="M3 3 L15 14.5 L3 26" fill="none" stroke="#243042" stroke-width="2.4" stroke-linecap="round" stroke-linejoin="round"/></svg>
<span class="t m" style="top:1101.7px;font-size:24px;line-height:24px;left:2138.9px;color:#243042;">2/5/2026, 11:06:37</span><span class="t m" style="top:1136.9px;font-size:24px;line-height:24px;left:2138.4px;color:#243042;">PM</span>
<div class="b" style="left:2441.9px;top:1110.9px;width:91px;height:40px;background:#d5dae6;border-radius:6px;"></div><span class="t" style="top:1119.6px;font-size:24px;line-height:24px;left:2459.0px;letter-spacing:-0.17px;font-weight:700;color:#000;">INFO</span>
<span class="t" style="top:1116.8px;font-size:28px;line-height:28px;left:2612.9px;letter-spacing:0.72px;-webkit-text-stroke:0.49px;color:#243042;">Receive ListRecommendations for product id</span>
<span class="t m u" style="top:1120.0px;font-size:24px;line-height:24px;left:3259.9px;color:#2564b7;">822139bdd31ced2a</span>
</div>
<div class="b" style="left:1972.4px;top:1131.5px;width:1790.4px;height:900px;border:2px solid #d3d6dc;border-radius:9px;background:#fff;"></div>
<div class="b" style="left:2855px;top:1130.5px;width:24px;height:2px;background:#3a4250;"></div>
<div class="b" style="left:2855px;top:1135px;width:24px;height:2px;background:#3a4250;"></div>
<span class="t" style="top:1169.4px;font-size:36px;line-height:36px;left:2005.7px;letter-spacing:0.17px;font-weight:700;color:#1a1f2b;">Span details</span>
<div class="b" style="left:2333px;top:1225.3px;width:126.8px;height:89px;background:#e6eff8;"></div>
<span class="t" style="top:1256.7px;font-size:28px;line-height:28px;left:2037.7px;letter-spacing:0.33px;-webkit-text-stroke:0.49px;color:#243042;">Overview</span>
<span class="t" style="top:1256.7px;font-size:28px;line-height:28px;left:2220.8px;letter-spacing:0.91px;-webkit-text-stroke:0.49px;color:#243042;">Errors</span>
<span class="t u" style="top:1256.7px;font-size:28px;line-height:28px;left:2363.0px;letter-spacing:1.65px;-webkit-text-stroke:0.49px;color:#2564b7;">Logs</span>
<span class="t" style="top:1256.7px;font-size:28px;line-height:28px;left:2490.2px;letter-spacing:0.90px;-webkit-text-stroke:0.49px;color:#243042;">Metadata</span>
<span class="t" style="top:1256.7px;font-size:28px;line-height:28px;left:2677.2px;letter-spacing:0.44px;-webkit-text-stroke:0.49px;color:#243042;">Raw span</span>
<div class="b" style="left:2006px;top:1312.6px;width:1723.8px;height:2px;background:#d3d6dc;"></div>
<div class="b" style="left:2333px;top:1311.3px;width:126.8px;height:3.8px;background:#2564b7;"></div>
<div class="b" style="left:2006.8px;top:1332px;width:1723px;height:511.5px;border:2px solid #d3d6dc;border-radius:9px;box-shadow:0 3px 5px rgba(60,70,90,0.16);"></div>
<span class="t" style="top:1368.8px;font-size:36px;line-height:36px;left:2038.2px;letter-spacing:0.02px;font-weight:700;color:#1a1f2b;">Related logs for span</span>
<span class="t" style="top:1414.9px;font-size:28px;line-height:28px;left:2040.4px;letter-spacing:0.58px;-webkit-text-stroke:0.49px;color:#5f6470;">View logs related to this specific span</span>
<svg style="left:2049.5px;top:1517.5px" width="28" height="18" viewBox="0 0 28 18"><path d="M3 3 L14.0 15 L25 3" fill="none" stroke="#243042" stroke-width="2.4" stroke-linecap="round" stroke-linejoin="round"/></svg><span class="t" style="top:1490.7px;font-size:28px;line-height:28px;left:2094.8px;letter-spacing:1.70px;font-weight:700;color:#243042;">Dataset:</span><span class="t" style="top:1490.7px;font-size:28px;line-height:28px;left:2230.6px;letter-spacing:1.09px;-webkit-text-stroke:0.49px;color:#243042;">logs-otel-v1*</span><span class="t" style="top:1539.7px;font-size:24px;line-height:24px;left:2094.8px;letter-spacing:0.60px;-webkit-text-stroke:0.42px;color:#5f6470;">10 recent results</span><div class="b" style="left:2449.3999999999996px;top:1494.0px;width:379.7px;height:63.4px;border:2px solid #2564b7;border-radius:9px;"></div><svg style="left:2476.7px;top:1511.0px" width="28.8" height="28.8" viewBox="0 0 28.8 28.8"><g transform="translate(2 2) scale(1.2783505154639176)" fill="none" stroke="#2564b7" stroke-width="1.7991935483870964" stroke-linecap="round" stroke-linejoin="round"><path d="M8 3.2 L3.5 3.2 Q1 3.2 1 5.7 L1 16 Q1 18.4 3.5 18.4 L13.8 18.4 Q16.2 18.4 16.2 16 L16.2 11.5"/><path d="M11.5 1 L18.4 1 L18.4 7.8 M18.2 1.2 L8.5 11"/></g></svg><span class="t" style="top:1511.9px;font-size:28px;line-height:28px;left:2523.0px;letter-spacing:0.30px;-webkit-text-stroke:0.49px;color:#2564b7;">View in Discover Logs</span>
<span class="t" style="top:1624.7px;font-size:24px;line-height:24px;left:2172.3px;letter-spacing:0.17px;font-weight:700;color:#1a1f2b;">Time</span>
<svg style="left:2238.3px;top:1625.2px" width="26" height="24" viewBox="0 0 26 24"><path d="M12.9 2 L12.9 19.5 M4 11.5 L12.9 20 L21.8 11.5" fill="none" stroke="#1a1f2b" stroke-width="2.2" stroke-linecap="round" stroke-linejoin="round"/></svg>
<span class="t" style="top:1624.7px;font-size:24px;line-height:24px;left:2463.9px;letter-spacing:0.23px;font-weight:700;color:#1a1f2b;">Level</span>
<span class="t" style="top:1624.7px;font-size:24px;line-height:24px;left:2631.8px;letter-spacing:0.15px;font-weight:700;color:#1a1f2b;">Message</span>
<span class="t" style="top:1624.7px;font-size:24px;line-height:24px;left:3260.8px;letter-spacing:-0.08px;font-weight:700;color:#1a1f2b;">Span ID</span>
<div class="b" style="left:2072.3px;top:1670.8px;width:1591.3px;height:2px;background:#d3d6dc;"></div>
<div class="b" style="left:2072.3px;top:1777px;width:1591.3px;height:2px;background:#d3d6dc;"></div>
<svg style="left:2095.2px;top:1710.5px" width="18" height="29" viewBox="0 0 18 29"><path d="M3 3 L15 14.5 L3 26" fill="none" stroke="#243042" stroke-width="2.4" stroke-linecap="round" stroke-linejoin="round"/></svg>
<span class="t m" style="top:1695.7px;font-size:24px;line-height:24px;left:2170.7px;color:#243042;">2/5/2026, 11:06:37</span><span class="t m" style="top:1730.9px;font-size:24px;line-height:24px;left:2170.2px;color:#243042;">PM</span>
<div class="b" style="left:2465px;top:1704.9px;width:91px;height:40px;background:#d5dae6;border-radius:6px;"></div><span class="t" style="top:1713.6px;font-size:24px;line-height:24px;left:2482.1px;letter-spacing:-0.17px;font-weight:700;color:#000;">INFO</span>
<span class="t" style="top:1710.4px;font-size:28px;line-height:28px;left:2631.3px;letter-spacing:0.96px;-webkit-text-stroke:0.49px;color:#243042;">User getting recommendations for product:</span>
<span class="t" style="top:1710.4px;font-size:28px;line-height:28px;left:3201.1px;letter-spacing:0.15px;-webkit-text-stroke:0.49px;color:#243042;">...</span>
<span class="t m" style="top:1713.6px;font-size:24px;line-height:24px;left:3259.9px;color:#243042;">6d1adccb77c4bcd3</span>
<div class="b" style="left:0px;top:0px;width:3838px;height:2px;background:#3a3a3c;"></div>
</body></html>
